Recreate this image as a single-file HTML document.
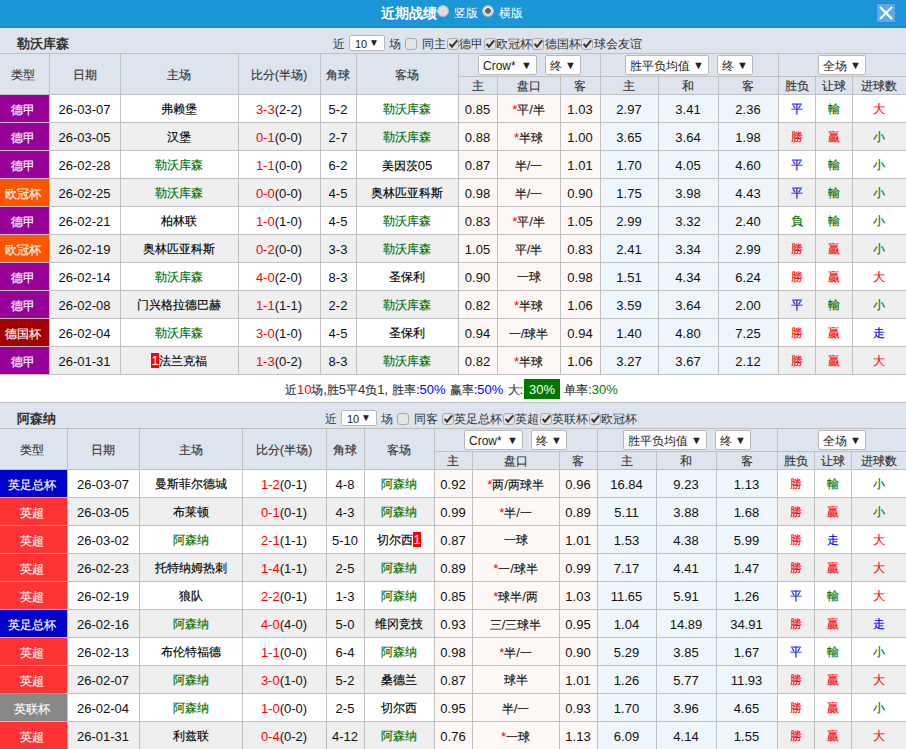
<!DOCTYPE html><html><head><meta charset="utf-8"><style>
*{margin:0;padding:0;box-sizing:border-box}
html,body{width:906px;height:749px;overflow:hidden;background:#fff;font-family:"Liberation Sans",sans-serif;font-size:12px;color:#222}
div{position:absolute}
.bar{left:0;top:0;width:906px;height:27px;background:#1a96d6}
.barline{left:0;top:27px;width:906px;height:1px;background:#0c8ed4}
.ttl{left:381px;top:4px;font-size:14px;font-weight:bold;color:#fff;line-height:18px}
.radio{top:5px;width:12px;height:12px;border-radius:50%;background:#dedede;border:1px solid #b8b8b8}
.radio.on{background:radial-gradient(circle,#666 0,#666 2.6px,#f2f2f2 3.2px,#d0d0d0 5px)}

.tx.wt{color:#fff;font-size:12px;line-height:16px}
.close{left:875px;top:2px;width:22px;height:22px;background:#5aaae8;border:2px solid #2a88e0}
.close svg{position:absolute;left:-2px;top:-2px}
.bg{left:0;width:906px;background:#dde4ee}
.ln{}
.stitle{left:17px;font-size:13px;font-weight:bold;color:#333}
.c{text-align:center;white-space:nowrap;overflow:hidden;color:#111}
.hd{color:#333}
.ty{color:#fff;padding-right:3px}
.h0{padding-right:3px}
.st{color:#f00;font-size:14px}
.n{font-size:13px}
.k{display:inline-block;width:1em;text-align:center;font-style:normal}
.z{-webkit-text-stroke:0.15px currentColor}
.rc{font-style:normal;background:#f00;color:#fff;display:inline-block;width:8px;height:15px;line-height:16px;text-align:center;vertical-align:middle;position:relative;top:-1px;font-size:12px}
.tx{line-height:18px;white-space:nowrap;color:#333}
.sel{background:#fff;border:1px solid #b8b8b8;border-radius:2px;white-space:nowrap;color:#222;padding-left:4px}
.sel .ar{position:absolute;right:4px;top:-1px;font-size:11px}
.sel.sm .st2{font-size:11px;padding-left:1px;position:relative;top:0}
.sel.sm .ar{font-size:10px;right:5px}
.cb{width:12px;height:12px;border:1px solid #aaa;border-radius:3px;background:#e4e4e4}
.cb svg{position:absolute;left:-1px;top:-1px}
.sum{line-height:18px;white-space:nowrap;color:#333;word-spacing:1px}
.gbox{background:#007700;color:#fff;padding:2px 5px 0;display:inline-block;line-height:17px;margin-left:1px;vertical-align:top;position:relative;top:-2px}
</style></head><body>
<div class="bar"></div><div class="barline"></div>
<div class="ttl"><i class="k">近</i><i class="k">期</i><i class="k">战</i><i class="k">绩</i></div>
<div class="radio" style="left:437px"></div><div class="tx wt" style="left:454px;top:5px"><i class="k">竖</i><i class="k">版</i></div>
<div class="radio on" style="left:482px"></div><div class="tx wt" style="left:499px;top:5px"><i class="k">横</i><i class="k">版</i></div>
<div class="close"><svg width="22" height="22" viewBox="0 0 22 22"><path d="M5 5 L17 17 M17 5 L5 17" stroke="#fff" stroke-width="2.2"/></svg></div>
<div class="bg" style="top:28px;height:25px"></div>
<div class="stitle" style="top:28px;height:25px;line-height:32px"><i class="k">勒</i><i class="k">沃</i><i class="k">库</i><i class="k">森</i></div>
<div class="tx" style="left:333px;top:35px;"><i class="k">近</i></div>
<div class="sel sm" style="left:349px;top:35px;width:36px;height:16px;line-height:16px"><span class="st2">10</span><span class="ar">▼</span></div>
<div class="tx" style="left:389px;top:35px;"><i class="k">场</i></div>
<div class="cb" style="left:405px;top:38px"></div>
<div class="tx" style="left:422px;top:35px;"><i class="k">同</i><i class="k">主</i></div>
<div class="cb" style="left:447px;top:38px"><svg width="12" height="12" viewBox="0 0 12 12"><path d="M2.6 5.8 L5 8.6 L10.2 2.4" stroke="#333" stroke-width="2" fill="none"/></svg></div>
<div class="tx" style="left:459px;top:35px;"><i class="k">德</i><i class="k">甲</i></div>
<div class="cb" style="left:484px;top:38px"><svg width="12" height="12" viewBox="0 0 12 12"><path d="M2.6 5.8 L5 8.6 L10.2 2.4" stroke="#333" stroke-width="2" fill="none"/></svg></div>
<div class="tx" style="left:496px;top:35px;"><i class="k">欧</i><i class="k">冠</i><i class="k">杯</i></div>
<div class="cb" style="left:532px;top:38px"><svg width="12" height="12" viewBox="0 0 12 12"><path d="M2.6 5.8 L5 8.6 L10.2 2.4" stroke="#333" stroke-width="2" fill="none"/></svg></div>
<div class="tx" style="left:545px;top:35px;"><i class="k">德</i><i class="k">国</i><i class="k">杯</i></div>
<div class="cb" style="left:581px;top:38px"><svg width="12" height="12" viewBox="0 0 12 12"><path d="M2.6 5.8 L5 8.6 L10.2 2.4" stroke="#333" stroke-width="2" fill="none"/></svg></div>
<div class="tx" style="left:594px;top:35px;"><i class="k">球</i><i class="k">会</i><i class="k">友</i><i class="k">谊</i></div>
<div class="ln" style="left:0px;width:906px;top:53px;height:1px;background:#c0c0c0"></div>
<div class="bg" style="top:54px;height:40px"></div>
<div class="c hd h0" style="left:0px;width:49px;top:54px;height:40px;line-height:42px;"><span class="z"><i class="k">类</i><i class="k">型</i></span></div>
<div class="c hd" style="left:49px;width:71px;top:54px;height:40px;line-height:42px;"><span class="z"><i class="k">日</i><i class="k">期</i></span></div>
<div class="c hd" style="left:120px;width:118px;top:54px;height:40px;line-height:42px;"><span class="z"><i class="k">主</i><i class="k">场</i></span></div>
<div class="c hd" style="left:238px;width:82px;top:54px;height:40px;line-height:42px;"><span class="z"><i class="k">比</i><i class="k">分</i></span><span class="n">(</span><span class="z"><i class="k">半</i><i class="k">场</i></span><span class="n">)</span></div>
<div class="c hd" style="left:320px;width:36px;top:54px;height:40px;line-height:42px;"><span class="z"><i class="k">角</i><i class="k">球</i></span></div>
<div class="c hd" style="left:356px;width:102px;top:54px;height:40px;line-height:42px;"><span class="z"><i class="k">客</i><i class="k">场</i></span></div>
<div class="c hd" style="left:458px;width:39px;top:77px;height:17px;line-height:19px;"><span class="z"><i class="k">主</i></span></div>
<div class="c hd" style="left:497px;width:63px;top:77px;height:17px;line-height:19px;"><span class="z"><i class="k">盘</i><i class="k">口</i></span></div>
<div class="c hd" style="left:560px;width:40px;top:77px;height:17px;line-height:19px;"><span class="z"><i class="k">客</i></span></div>
<div class="c hd" style="left:600px;width:58px;top:77px;height:17px;line-height:19px;"><span class="z"><i class="k">主</i></span></div>
<div class="c hd" style="left:658px;width:60px;top:77px;height:17px;line-height:19px;"><span class="z"><i class="k">和</i></span></div>
<div class="c hd" style="left:718px;width:60px;top:77px;height:17px;line-height:19px;"><span class="z"><i class="k">客</i></span></div>
<div class="c hd" style="left:778px;width:37px;top:77px;height:17px;line-height:19px;"><span class="z"><i class="k">胜</i><i class="k">负</i></span></div>
<div class="c hd" style="left:815px;width:37px;top:77px;height:17px;line-height:19px;"><span class="z"><i class="k">让</i><i class="k">球</i></span></div>
<div class="c hd" style="left:852px;width:54px;top:77px;height:17px;line-height:19px;"><span class="z"><i class="k">进</i><i class="k">球</i><i class="k">数</i></span></div>
<div class="ln" style="left:458px;width:448px;top:76px;height:1px;background:#c0c0c0"></div>
<div class="ln" style="left:0px;width:906px;top:94px;height:1px;background:#c0c0c0"></div>
<div class="sel" style="left:478px;top:55px;width:59px;height:20px;line-height:20px"><span class="st2">Crow*</span><span class="ar">▼</span></div>
<div class="sel" style="left:545px;top:55px;width:36px;height:20px;line-height:20px"><span class="st2"><i class="k">终</i></span><span class="ar">▼</span></div>
<div class="sel" style="left:625px;top:55px;width:84px;height:20px;line-height:20px"><span class="st2"><i class="k">胜</i><i class="k">平</i><i class="k">负</i><i class="k">均</i><i class="k">值</i></span><span class="ar">▼</span></div>
<div class="sel" style="left:717px;top:55px;width:36px;height:20px;line-height:20px"><span class="st2"><i class="k">终</i></span><span class="ar">▼</span></div>
<div class="sel" style="left:818px;top:55px;width:48px;height:20px;line-height:20px"><span class="st2"><i class="k">全</i><i class="k">场</i></span><span class="ar">▼</span></div>
<div class="ln" style="left:49px;width:1px;top:54px;height:40px;background:#c0c0c0"></div>
<div class="ln" style="left:120px;width:1px;top:54px;height:40px;background:#c0c0c0"></div>
<div class="ln" style="left:238px;width:1px;top:54px;height:40px;background:#c0c0c0"></div>
<div class="ln" style="left:320px;width:1px;top:54px;height:40px;background:#c0c0c0"></div>
<div class="ln" style="left:356px;width:1px;top:54px;height:40px;background:#c0c0c0"></div>
<div class="ln" style="left:458px;width:1px;top:54px;height:40px;background:#c0c0c0"></div>
<div class="ln" style="left:497px;width:1px;top:76px;height:18px;background:#c0c0c0"></div>
<div class="ln" style="left:560px;width:1px;top:76px;height:18px;background:#c0c0c0"></div>
<div class="ln" style="left:600px;width:1px;top:54px;height:40px;background:#c0c0c0"></div>
<div class="ln" style="left:658px;width:1px;top:76px;height:18px;background:#c0c0c0"></div>
<div class="ln" style="left:718px;width:1px;top:76px;height:18px;background:#c0c0c0"></div>
<div class="ln" style="left:778px;width:1px;top:54px;height:40px;background:#c0c0c0"></div>
<div class="ln" style="left:815px;width:1px;top:76px;height:18px;background:#c0c0c0"></div>
<div class="ln" style="left:852px;width:1px;top:76px;height:18px;background:#c0c0c0"></div>
<div class="bg" style="top:95px;height:27px;background:#ffffff"></div>
<div class="bg" style="top:95px;height:27px;left:458px;width:142px;background:#fdf8f5"></div>
<div class="bg" style="top:95px;height:27px;left:600px;width:178px;background:#eef6fb"></div>
<div class="c ty" style="left:0px;width:49px;top:95px;height:27px;line-height:30px;background:#990099"><span class="z"><i class="k">德</i><i class="k">甲</i></span></div>
<div class="c" style="left:49px;width:71px;top:95px;height:27px;line-height:29px;"><span class="n">26-03-07</span></div>
<div class="c" style="left:120px;width:118px;top:95px;height:27px;line-height:29px;"><span style="color:#000"><span class="z"><i class="k">弗</i><i class="k">赖</i><i class="k">堡</i></span></span></div>
<div class="c" style="left:238px;width:82px;top:95px;height:27px;line-height:29px;"><span style="color:#f00"><span class="n">3-3</span></span><span class="n">(2-2)</span></div>
<div class="c" style="left:320px;width:36px;top:95px;height:27px;line-height:29px;"><span class="n">5-2</span></div>
<div class="c" style="left:356px;width:102px;top:95px;height:27px;line-height:29px;"><span style="color:#007000"><span class="z"><i class="k">勒</i><i class="k">沃</i><i class="k">库</i><i class="k">森</i></span></span></div>
<div class="c" style="left:458px;width:39px;top:95px;height:27px;line-height:29px;"><span class="n">0.85</span></div>
<div class="c" style="left:497px;width:63px;top:95px;height:27px;line-height:29px;"><span class="st"><span class="n">*</span></span><span class="z"><i class="k">平</i></span><span class="n">/</span><span class="z"><i class="k">半</i></span></div>
<div class="c" style="left:560px;width:40px;top:95px;height:27px;line-height:29px;"><span class="n">1.03</span></div>
<div class="c" style="left:600px;width:58px;top:95px;height:27px;line-height:29px;"><span class="n">2.97</span></div>
<div class="c" style="left:658px;width:60px;top:95px;height:27px;line-height:29px;"><span class="n">3.41</span></div>
<div class="c" style="left:718px;width:60px;top:95px;height:27px;line-height:29px;"><span class="n">2.36</span></div>
<div class="c" style="left:778px;width:37px;top:95px;height:27px;line-height:29px;color:#0000ff"><span class="z"><i class="k">平</i></span></div>
<div class="c" style="left:815px;width:37px;top:95px;height:27px;line-height:29px;color:#007000"><span class="z"><i class="k">輸</i></span></div>
<div class="c" style="left:852px;width:54px;top:95px;height:27px;line-height:29px;color:#ff0000"><span class="z"><i class="k">大</i></span></div>
<div class="ln" style="left:0px;width:906px;top:122px;height:1px;background:#c0c0c0"></div>
<div class="ln" style="left:49px;width:1px;top:95px;height:27px;background:#c0c0c0"></div>
<div class="ln" style="left:120px;width:1px;top:95px;height:27px;background:#c0c0c0"></div>
<div class="ln" style="left:238px;width:1px;top:95px;height:27px;background:#c0c0c0"></div>
<div class="ln" style="left:320px;width:1px;top:95px;height:27px;background:#c0c0c0"></div>
<div class="ln" style="left:356px;width:1px;top:95px;height:27px;background:#c0c0c0"></div>
<div class="ln" style="left:458px;width:1px;top:95px;height:27px;background:#c0c0c0"></div>
<div class="ln" style="left:497px;width:1px;top:95px;height:27px;background:#c0c0c0"></div>
<div class="ln" style="left:560px;width:1px;top:95px;height:27px;background:#c0c0c0"></div>
<div class="ln" style="left:600px;width:1px;top:95px;height:27px;background:#c0c0c0"></div>
<div class="ln" style="left:658px;width:1px;top:95px;height:27px;background:#c0c0c0"></div>
<div class="ln" style="left:718px;width:1px;top:95px;height:27px;background:#c0c0c0"></div>
<div class="ln" style="left:778px;width:1px;top:95px;height:27px;background:#c0c0c0"></div>
<div class="ln" style="left:815px;width:1px;top:95px;height:27px;background:#c0c0c0"></div>
<div class="ln" style="left:852px;width:1px;top:95px;height:27px;background:#c0c0c0"></div>
<div class="bg" style="top:123px;height:27px;background:#efefef"></div>
<div class="bg" style="top:123px;height:27px;left:458px;width:142px;background:#fdf8f5"></div>
<div class="bg" style="top:123px;height:27px;left:600px;width:178px;background:#eef6fb"></div>
<div class="c ty" style="left:0px;width:49px;top:123px;height:27px;line-height:30px;background:#990099"><span class="z"><i class="k">德</i><i class="k">甲</i></span></div>
<div class="c" style="left:49px;width:71px;top:123px;height:27px;line-height:29px;"><span class="n">26-03-05</span></div>
<div class="c" style="left:120px;width:118px;top:123px;height:27px;line-height:29px;"><span style="color:#000"><span class="z"><i class="k">汉</i><i class="k">堡</i></span></span></div>
<div class="c" style="left:238px;width:82px;top:123px;height:27px;line-height:29px;"><span style="color:#f00"><span class="n">0-1</span></span><span class="n">(0-0)</span></div>
<div class="c" style="left:320px;width:36px;top:123px;height:27px;line-height:29px;"><span class="n">2-7</span></div>
<div class="c" style="left:356px;width:102px;top:123px;height:27px;line-height:29px;"><span style="color:#007000"><span class="z"><i class="k">勒</i><i class="k">沃</i><i class="k">库</i><i class="k">森</i></span></span></div>
<div class="c" style="left:458px;width:39px;top:123px;height:27px;line-height:29px;"><span class="n">0.88</span></div>
<div class="c" style="left:497px;width:63px;top:123px;height:27px;line-height:29px;"><span class="st"><span class="n">*</span></span><span class="z"><i class="k">半</i><i class="k">球</i></span></div>
<div class="c" style="left:560px;width:40px;top:123px;height:27px;line-height:29px;"><span class="n">1.00</span></div>
<div class="c" style="left:600px;width:58px;top:123px;height:27px;line-height:29px;"><span class="n">3.65</span></div>
<div class="c" style="left:658px;width:60px;top:123px;height:27px;line-height:29px;"><span class="n">3.64</span></div>
<div class="c" style="left:718px;width:60px;top:123px;height:27px;line-height:29px;"><span class="n">1.98</span></div>
<div class="c" style="left:778px;width:37px;top:123px;height:27px;line-height:29px;color:#ff0000"><span class="z"><i class="k">勝</i></span></div>
<div class="c" style="left:815px;width:37px;top:123px;height:27px;line-height:29px;color:#ff0000"><span class="z"><i class="k">贏</i></span></div>
<div class="c" style="left:852px;width:54px;top:123px;height:27px;line-height:29px;color:#007000"><span class="z"><i class="k">小</i></span></div>
<div class="ln" style="left:0px;width:906px;top:150px;height:1px;background:#c0c0c0"></div>
<div class="ln" style="left:49px;width:1px;top:123px;height:27px;background:#c0c0c0"></div>
<div class="ln" style="left:120px;width:1px;top:123px;height:27px;background:#c0c0c0"></div>
<div class="ln" style="left:238px;width:1px;top:123px;height:27px;background:#c0c0c0"></div>
<div class="ln" style="left:320px;width:1px;top:123px;height:27px;background:#c0c0c0"></div>
<div class="ln" style="left:356px;width:1px;top:123px;height:27px;background:#c0c0c0"></div>
<div class="ln" style="left:458px;width:1px;top:123px;height:27px;background:#c0c0c0"></div>
<div class="ln" style="left:497px;width:1px;top:123px;height:27px;background:#c0c0c0"></div>
<div class="ln" style="left:560px;width:1px;top:123px;height:27px;background:#c0c0c0"></div>
<div class="ln" style="left:600px;width:1px;top:123px;height:27px;background:#c0c0c0"></div>
<div class="ln" style="left:658px;width:1px;top:123px;height:27px;background:#c0c0c0"></div>
<div class="ln" style="left:718px;width:1px;top:123px;height:27px;background:#c0c0c0"></div>
<div class="ln" style="left:778px;width:1px;top:123px;height:27px;background:#c0c0c0"></div>
<div class="ln" style="left:815px;width:1px;top:123px;height:27px;background:#c0c0c0"></div>
<div class="ln" style="left:852px;width:1px;top:123px;height:27px;background:#c0c0c0"></div>
<div class="bg" style="top:151px;height:27px;background:#ffffff"></div>
<div class="bg" style="top:151px;height:27px;left:458px;width:142px;background:#fdf8f5"></div>
<div class="bg" style="top:151px;height:27px;left:600px;width:178px;background:#eef6fb"></div>
<div class="c ty" style="left:0px;width:49px;top:151px;height:27px;line-height:30px;background:#990099"><span class="z"><i class="k">德</i><i class="k">甲</i></span></div>
<div class="c" style="left:49px;width:71px;top:151px;height:27px;line-height:29px;"><span class="n">26-02-28</span></div>
<div class="c" style="left:120px;width:118px;top:151px;height:27px;line-height:29px;"><span style="color:#007000"><span class="z"><i class="k">勒</i><i class="k">沃</i><i class="k">库</i><i class="k">森</i></span></span></div>
<div class="c" style="left:238px;width:82px;top:151px;height:27px;line-height:29px;"><span style="color:#f00"><span class="n">1-1</span></span><span class="n">(0-0)</span></div>
<div class="c" style="left:320px;width:36px;top:151px;height:27px;line-height:29px;"><span class="n">6-2</span></div>
<div class="c" style="left:356px;width:102px;top:151px;height:27px;line-height:29px;"><span style="color:#000"><span class="z"><i class="k">美</i><i class="k">因</i><i class="k">茨</i></span><span class="n">05</span></span></div>
<div class="c" style="left:458px;width:39px;top:151px;height:27px;line-height:29px;"><span class="n">0.87</span></div>
<div class="c" style="left:497px;width:63px;top:151px;height:27px;line-height:29px;"><span class="z"><i class="k">半</i></span><span class="n">/</span><span class="z"><i class="k">一</i></span></div>
<div class="c" style="left:560px;width:40px;top:151px;height:27px;line-height:29px;"><span class="n">1.01</span></div>
<div class="c" style="left:600px;width:58px;top:151px;height:27px;line-height:29px;"><span class="n">1.70</span></div>
<div class="c" style="left:658px;width:60px;top:151px;height:27px;line-height:29px;"><span class="n">4.05</span></div>
<div class="c" style="left:718px;width:60px;top:151px;height:27px;line-height:29px;"><span class="n">4.60</span></div>
<div class="c" style="left:778px;width:37px;top:151px;height:27px;line-height:29px;color:#0000ff"><span class="z"><i class="k">平</i></span></div>
<div class="c" style="left:815px;width:37px;top:151px;height:27px;line-height:29px;color:#007000"><span class="z"><i class="k">輸</i></span></div>
<div class="c" style="left:852px;width:54px;top:151px;height:27px;line-height:29px;color:#007000"><span class="z"><i class="k">小</i></span></div>
<div class="ln" style="left:0px;width:906px;top:178px;height:1px;background:#c0c0c0"></div>
<div class="ln" style="left:49px;width:1px;top:151px;height:27px;background:#c0c0c0"></div>
<div class="ln" style="left:120px;width:1px;top:151px;height:27px;background:#c0c0c0"></div>
<div class="ln" style="left:238px;width:1px;top:151px;height:27px;background:#c0c0c0"></div>
<div class="ln" style="left:320px;width:1px;top:151px;height:27px;background:#c0c0c0"></div>
<div class="ln" style="left:356px;width:1px;top:151px;height:27px;background:#c0c0c0"></div>
<div class="ln" style="left:458px;width:1px;top:151px;height:27px;background:#c0c0c0"></div>
<div class="ln" style="left:497px;width:1px;top:151px;height:27px;background:#c0c0c0"></div>
<div class="ln" style="left:560px;width:1px;top:151px;height:27px;background:#c0c0c0"></div>
<div class="ln" style="left:600px;width:1px;top:151px;height:27px;background:#c0c0c0"></div>
<div class="ln" style="left:658px;width:1px;top:151px;height:27px;background:#c0c0c0"></div>
<div class="ln" style="left:718px;width:1px;top:151px;height:27px;background:#c0c0c0"></div>
<div class="ln" style="left:778px;width:1px;top:151px;height:27px;background:#c0c0c0"></div>
<div class="ln" style="left:815px;width:1px;top:151px;height:27px;background:#c0c0c0"></div>
<div class="ln" style="left:852px;width:1px;top:151px;height:27px;background:#c0c0c0"></div>
<div class="bg" style="top:179px;height:27px;background:#efefef"></div>
<div class="bg" style="top:179px;height:27px;left:458px;width:142px;background:#fdf8f5"></div>
<div class="bg" style="top:179px;height:27px;left:600px;width:178px;background:#eef6fb"></div>
<div class="c ty" style="left:0px;width:49px;top:179px;height:27px;line-height:30px;background:#ff5500"><span class="z"><i class="k">欧</i><i class="k">冠</i><i class="k">杯</i></span></div>
<div class="c" style="left:49px;width:71px;top:179px;height:27px;line-height:29px;"><span class="n">26-02-25</span></div>
<div class="c" style="left:120px;width:118px;top:179px;height:27px;line-height:29px;"><span style="color:#007000"><span class="z"><i class="k">勒</i><i class="k">沃</i><i class="k">库</i><i class="k">森</i></span></span></div>
<div class="c" style="left:238px;width:82px;top:179px;height:27px;line-height:29px;"><span style="color:#f00"><span class="n">0-0</span></span><span class="n">(0-0)</span></div>
<div class="c" style="left:320px;width:36px;top:179px;height:27px;line-height:29px;"><span class="n">4-5</span></div>
<div class="c" style="left:356px;width:102px;top:179px;height:27px;line-height:29px;"><span style="color:#000"><span class="z"><i class="k">奥</i><i class="k">林</i><i class="k">匹</i><i class="k">亚</i><i class="k">科</i><i class="k">斯</i></span></span></div>
<div class="c" style="left:458px;width:39px;top:179px;height:27px;line-height:29px;"><span class="n">0.98</span></div>
<div class="c" style="left:497px;width:63px;top:179px;height:27px;line-height:29px;"><span class="z"><i class="k">半</i></span><span class="n">/</span><span class="z"><i class="k">一</i></span></div>
<div class="c" style="left:560px;width:40px;top:179px;height:27px;line-height:29px;"><span class="n">0.90</span></div>
<div class="c" style="left:600px;width:58px;top:179px;height:27px;line-height:29px;"><span class="n">1.75</span></div>
<div class="c" style="left:658px;width:60px;top:179px;height:27px;line-height:29px;"><span class="n">3.98</span></div>
<div class="c" style="left:718px;width:60px;top:179px;height:27px;line-height:29px;"><span class="n">4.43</span></div>
<div class="c" style="left:778px;width:37px;top:179px;height:27px;line-height:29px;color:#0000ff"><span class="z"><i class="k">平</i></span></div>
<div class="c" style="left:815px;width:37px;top:179px;height:27px;line-height:29px;color:#007000"><span class="z"><i class="k">輸</i></span></div>
<div class="c" style="left:852px;width:54px;top:179px;height:27px;line-height:29px;color:#007000"><span class="z"><i class="k">小</i></span></div>
<div class="ln" style="left:0px;width:906px;top:206px;height:1px;background:#c0c0c0"></div>
<div class="ln" style="left:49px;width:1px;top:179px;height:27px;background:#c0c0c0"></div>
<div class="ln" style="left:120px;width:1px;top:179px;height:27px;background:#c0c0c0"></div>
<div class="ln" style="left:238px;width:1px;top:179px;height:27px;background:#c0c0c0"></div>
<div class="ln" style="left:320px;width:1px;top:179px;height:27px;background:#c0c0c0"></div>
<div class="ln" style="left:356px;width:1px;top:179px;height:27px;background:#c0c0c0"></div>
<div class="ln" style="left:458px;width:1px;top:179px;height:27px;background:#c0c0c0"></div>
<div class="ln" style="left:497px;width:1px;top:179px;height:27px;background:#c0c0c0"></div>
<div class="ln" style="left:560px;width:1px;top:179px;height:27px;background:#c0c0c0"></div>
<div class="ln" style="left:600px;width:1px;top:179px;height:27px;background:#c0c0c0"></div>
<div class="ln" style="left:658px;width:1px;top:179px;height:27px;background:#c0c0c0"></div>
<div class="ln" style="left:718px;width:1px;top:179px;height:27px;background:#c0c0c0"></div>
<div class="ln" style="left:778px;width:1px;top:179px;height:27px;background:#c0c0c0"></div>
<div class="ln" style="left:815px;width:1px;top:179px;height:27px;background:#c0c0c0"></div>
<div class="ln" style="left:852px;width:1px;top:179px;height:27px;background:#c0c0c0"></div>
<div class="bg" style="top:207px;height:27px;background:#ffffff"></div>
<div class="bg" style="top:207px;height:27px;left:458px;width:142px;background:#fdf8f5"></div>
<div class="bg" style="top:207px;height:27px;left:600px;width:178px;background:#eef6fb"></div>
<div class="c ty" style="left:0px;width:49px;top:207px;height:27px;line-height:30px;background:#990099"><span class="z"><i class="k">德</i><i class="k">甲</i></span></div>
<div class="c" style="left:49px;width:71px;top:207px;height:27px;line-height:29px;"><span class="n">26-02-21</span></div>
<div class="c" style="left:120px;width:118px;top:207px;height:27px;line-height:29px;"><span style="color:#000"><span class="z"><i class="k">柏</i><i class="k">林</i><i class="k">联</i></span></span></div>
<div class="c" style="left:238px;width:82px;top:207px;height:27px;line-height:29px;"><span style="color:#f00"><span class="n">1-0</span></span><span class="n">(1-0)</span></div>
<div class="c" style="left:320px;width:36px;top:207px;height:27px;line-height:29px;"><span class="n">4-5</span></div>
<div class="c" style="left:356px;width:102px;top:207px;height:27px;line-height:29px;"><span style="color:#007000"><span class="z"><i class="k">勒</i><i class="k">沃</i><i class="k">库</i><i class="k">森</i></span></span></div>
<div class="c" style="left:458px;width:39px;top:207px;height:27px;line-height:29px;"><span class="n">0.83</span></div>
<div class="c" style="left:497px;width:63px;top:207px;height:27px;line-height:29px;"><span class="st"><span class="n">*</span></span><span class="z"><i class="k">平</i></span><span class="n">/</span><span class="z"><i class="k">半</i></span></div>
<div class="c" style="left:560px;width:40px;top:207px;height:27px;line-height:29px;"><span class="n">1.05</span></div>
<div class="c" style="left:600px;width:58px;top:207px;height:27px;line-height:29px;"><span class="n">2.99</span></div>
<div class="c" style="left:658px;width:60px;top:207px;height:27px;line-height:29px;"><span class="n">3.32</span></div>
<div class="c" style="left:718px;width:60px;top:207px;height:27px;line-height:29px;"><span class="n">2.40</span></div>
<div class="c" style="left:778px;width:37px;top:207px;height:27px;line-height:29px;color:#007000"><span class="z"><i class="k">負</i></span></div>
<div class="c" style="left:815px;width:37px;top:207px;height:27px;line-height:29px;color:#007000"><span class="z"><i class="k">輸</i></span></div>
<div class="c" style="left:852px;width:54px;top:207px;height:27px;line-height:29px;color:#007000"><span class="z"><i class="k">小</i></span></div>
<div class="ln" style="left:0px;width:906px;top:234px;height:1px;background:#c0c0c0"></div>
<div class="ln" style="left:49px;width:1px;top:207px;height:27px;background:#c0c0c0"></div>
<div class="ln" style="left:120px;width:1px;top:207px;height:27px;background:#c0c0c0"></div>
<div class="ln" style="left:238px;width:1px;top:207px;height:27px;background:#c0c0c0"></div>
<div class="ln" style="left:320px;width:1px;top:207px;height:27px;background:#c0c0c0"></div>
<div class="ln" style="left:356px;width:1px;top:207px;height:27px;background:#c0c0c0"></div>
<div class="ln" style="left:458px;width:1px;top:207px;height:27px;background:#c0c0c0"></div>
<div class="ln" style="left:497px;width:1px;top:207px;height:27px;background:#c0c0c0"></div>
<div class="ln" style="left:560px;width:1px;top:207px;height:27px;background:#c0c0c0"></div>
<div class="ln" style="left:600px;width:1px;top:207px;height:27px;background:#c0c0c0"></div>
<div class="ln" style="left:658px;width:1px;top:207px;height:27px;background:#c0c0c0"></div>
<div class="ln" style="left:718px;width:1px;top:207px;height:27px;background:#c0c0c0"></div>
<div class="ln" style="left:778px;width:1px;top:207px;height:27px;background:#c0c0c0"></div>
<div class="ln" style="left:815px;width:1px;top:207px;height:27px;background:#c0c0c0"></div>
<div class="ln" style="left:852px;width:1px;top:207px;height:27px;background:#c0c0c0"></div>
<div class="bg" style="top:235px;height:27px;background:#efefef"></div>
<div class="bg" style="top:235px;height:27px;left:458px;width:142px;background:#fdf8f5"></div>
<div class="bg" style="top:235px;height:27px;left:600px;width:178px;background:#eef6fb"></div>
<div class="c ty" style="left:0px;width:49px;top:235px;height:27px;line-height:30px;background:#ff5500"><span class="z"><i class="k">欧</i><i class="k">冠</i><i class="k">杯</i></span></div>
<div class="c" style="left:49px;width:71px;top:235px;height:27px;line-height:29px;"><span class="n">26-02-19</span></div>
<div class="c" style="left:120px;width:118px;top:235px;height:27px;line-height:29px;"><span style="color:#000"><span class="z"><i class="k">奥</i><i class="k">林</i><i class="k">匹</i><i class="k">亚</i><i class="k">科</i><i class="k">斯</i></span></span></div>
<div class="c" style="left:238px;width:82px;top:235px;height:27px;line-height:29px;"><span style="color:#f00"><span class="n">0-2</span></span><span class="n">(0-0)</span></div>
<div class="c" style="left:320px;width:36px;top:235px;height:27px;line-height:29px;"><span class="n">3-3</span></div>
<div class="c" style="left:356px;width:102px;top:235px;height:27px;line-height:29px;"><span style="color:#007000"><span class="z"><i class="k">勒</i><i class="k">沃</i><i class="k">库</i><i class="k">森</i></span></span></div>
<div class="c" style="left:458px;width:39px;top:235px;height:27px;line-height:29px;"><span class="n">1.05</span></div>
<div class="c" style="left:497px;width:63px;top:235px;height:27px;line-height:29px;"><span class="z"><i class="k">平</i></span><span class="n">/</span><span class="z"><i class="k">半</i></span></div>
<div class="c" style="left:560px;width:40px;top:235px;height:27px;line-height:29px;"><span class="n">0.83</span></div>
<div class="c" style="left:600px;width:58px;top:235px;height:27px;line-height:29px;"><span class="n">2.41</span></div>
<div class="c" style="left:658px;width:60px;top:235px;height:27px;line-height:29px;"><span class="n">3.34</span></div>
<div class="c" style="left:718px;width:60px;top:235px;height:27px;line-height:29px;"><span class="n">2.99</span></div>
<div class="c" style="left:778px;width:37px;top:235px;height:27px;line-height:29px;color:#ff0000"><span class="z"><i class="k">勝</i></span></div>
<div class="c" style="left:815px;width:37px;top:235px;height:27px;line-height:29px;color:#ff0000"><span class="z"><i class="k">贏</i></span></div>
<div class="c" style="left:852px;width:54px;top:235px;height:27px;line-height:29px;color:#007000"><span class="z"><i class="k">小</i></span></div>
<div class="ln" style="left:0px;width:906px;top:262px;height:1px;background:#c0c0c0"></div>
<div class="ln" style="left:49px;width:1px;top:235px;height:27px;background:#c0c0c0"></div>
<div class="ln" style="left:120px;width:1px;top:235px;height:27px;background:#c0c0c0"></div>
<div class="ln" style="left:238px;width:1px;top:235px;height:27px;background:#c0c0c0"></div>
<div class="ln" style="left:320px;width:1px;top:235px;height:27px;background:#c0c0c0"></div>
<div class="ln" style="left:356px;width:1px;top:235px;height:27px;background:#c0c0c0"></div>
<div class="ln" style="left:458px;width:1px;top:235px;height:27px;background:#c0c0c0"></div>
<div class="ln" style="left:497px;width:1px;top:235px;height:27px;background:#c0c0c0"></div>
<div class="ln" style="left:560px;width:1px;top:235px;height:27px;background:#c0c0c0"></div>
<div class="ln" style="left:600px;width:1px;top:235px;height:27px;background:#c0c0c0"></div>
<div class="ln" style="left:658px;width:1px;top:235px;height:27px;background:#c0c0c0"></div>
<div class="ln" style="left:718px;width:1px;top:235px;height:27px;background:#c0c0c0"></div>
<div class="ln" style="left:778px;width:1px;top:235px;height:27px;background:#c0c0c0"></div>
<div class="ln" style="left:815px;width:1px;top:235px;height:27px;background:#c0c0c0"></div>
<div class="ln" style="left:852px;width:1px;top:235px;height:27px;background:#c0c0c0"></div>
<div class="bg" style="top:263px;height:27px;background:#ffffff"></div>
<div class="bg" style="top:263px;height:27px;left:458px;width:142px;background:#fdf8f5"></div>
<div class="bg" style="top:263px;height:27px;left:600px;width:178px;background:#eef6fb"></div>
<div class="c ty" style="left:0px;width:49px;top:263px;height:27px;line-height:30px;background:#990099"><span class="z"><i class="k">德</i><i class="k">甲</i></span></div>
<div class="c" style="left:49px;width:71px;top:263px;height:27px;line-height:29px;"><span class="n">26-02-14</span></div>
<div class="c" style="left:120px;width:118px;top:263px;height:27px;line-height:29px;"><span style="color:#007000"><span class="z"><i class="k">勒</i><i class="k">沃</i><i class="k">库</i><i class="k">森</i></span></span></div>
<div class="c" style="left:238px;width:82px;top:263px;height:27px;line-height:29px;"><span style="color:#f00"><span class="n">4-0</span></span><span class="n">(2-0)</span></div>
<div class="c" style="left:320px;width:36px;top:263px;height:27px;line-height:29px;"><span class="n">8-3</span></div>
<div class="c" style="left:356px;width:102px;top:263px;height:27px;line-height:29px;"><span style="color:#000"><span class="z"><i class="k">圣</i><i class="k">保</i><i class="k">利</i></span></span></div>
<div class="c" style="left:458px;width:39px;top:263px;height:27px;line-height:29px;"><span class="n">0.90</span></div>
<div class="c" style="left:497px;width:63px;top:263px;height:27px;line-height:29px;"><span class="z"><i class="k">一</i><i class="k">球</i></span></div>
<div class="c" style="left:560px;width:40px;top:263px;height:27px;line-height:29px;"><span class="n">0.98</span></div>
<div class="c" style="left:600px;width:58px;top:263px;height:27px;line-height:29px;"><span class="n">1.51</span></div>
<div class="c" style="left:658px;width:60px;top:263px;height:27px;line-height:29px;"><span class="n">4.34</span></div>
<div class="c" style="left:718px;width:60px;top:263px;height:27px;line-height:29px;"><span class="n">6.24</span></div>
<div class="c" style="left:778px;width:37px;top:263px;height:27px;line-height:29px;color:#ff0000"><span class="z"><i class="k">勝</i></span></div>
<div class="c" style="left:815px;width:37px;top:263px;height:27px;line-height:29px;color:#ff0000"><span class="z"><i class="k">贏</i></span></div>
<div class="c" style="left:852px;width:54px;top:263px;height:27px;line-height:29px;color:#ff0000"><span class="z"><i class="k">大</i></span></div>
<div class="ln" style="left:0px;width:906px;top:290px;height:1px;background:#c0c0c0"></div>
<div class="ln" style="left:49px;width:1px;top:263px;height:27px;background:#c0c0c0"></div>
<div class="ln" style="left:120px;width:1px;top:263px;height:27px;background:#c0c0c0"></div>
<div class="ln" style="left:238px;width:1px;top:263px;height:27px;background:#c0c0c0"></div>
<div class="ln" style="left:320px;width:1px;top:263px;height:27px;background:#c0c0c0"></div>
<div class="ln" style="left:356px;width:1px;top:263px;height:27px;background:#c0c0c0"></div>
<div class="ln" style="left:458px;width:1px;top:263px;height:27px;background:#c0c0c0"></div>
<div class="ln" style="left:497px;width:1px;top:263px;height:27px;background:#c0c0c0"></div>
<div class="ln" style="left:560px;width:1px;top:263px;height:27px;background:#c0c0c0"></div>
<div class="ln" style="left:600px;width:1px;top:263px;height:27px;background:#c0c0c0"></div>
<div class="ln" style="left:658px;width:1px;top:263px;height:27px;background:#c0c0c0"></div>
<div class="ln" style="left:718px;width:1px;top:263px;height:27px;background:#c0c0c0"></div>
<div class="ln" style="left:778px;width:1px;top:263px;height:27px;background:#c0c0c0"></div>
<div class="ln" style="left:815px;width:1px;top:263px;height:27px;background:#c0c0c0"></div>
<div class="ln" style="left:852px;width:1px;top:263px;height:27px;background:#c0c0c0"></div>
<div class="bg" style="top:291px;height:27px;background:#efefef"></div>
<div class="bg" style="top:291px;height:27px;left:458px;width:142px;background:#fdf8f5"></div>
<div class="bg" style="top:291px;height:27px;left:600px;width:178px;background:#eef6fb"></div>
<div class="c ty" style="left:0px;width:49px;top:291px;height:27px;line-height:30px;background:#990099"><span class="z"><i class="k">德</i><i class="k">甲</i></span></div>
<div class="c" style="left:49px;width:71px;top:291px;height:27px;line-height:29px;"><span class="n">26-02-08</span></div>
<div class="c" style="left:120px;width:118px;top:291px;height:27px;line-height:29px;"><span style="color:#000"><span class="z"><i class="k">门</i><i class="k">兴</i><i class="k">格</i><i class="k">拉</i><i class="k">德</i><i class="k">巴</i><i class="k">赫</i></span></span></div>
<div class="c" style="left:238px;width:82px;top:291px;height:27px;line-height:29px;"><span style="color:#f00"><span class="n">1-1</span></span><span class="n">(1-1)</span></div>
<div class="c" style="left:320px;width:36px;top:291px;height:27px;line-height:29px;"><span class="n">2-2</span></div>
<div class="c" style="left:356px;width:102px;top:291px;height:27px;line-height:29px;"><span style="color:#007000"><span class="z"><i class="k">勒</i><i class="k">沃</i><i class="k">库</i><i class="k">森</i></span></span></div>
<div class="c" style="left:458px;width:39px;top:291px;height:27px;line-height:29px;"><span class="n">0.82</span></div>
<div class="c" style="left:497px;width:63px;top:291px;height:27px;line-height:29px;"><span class="st"><span class="n">*</span></span><span class="z"><i class="k">半</i><i class="k">球</i></span></div>
<div class="c" style="left:560px;width:40px;top:291px;height:27px;line-height:29px;"><span class="n">1.06</span></div>
<div class="c" style="left:600px;width:58px;top:291px;height:27px;line-height:29px;"><span class="n">3.59</span></div>
<div class="c" style="left:658px;width:60px;top:291px;height:27px;line-height:29px;"><span class="n">3.64</span></div>
<div class="c" style="left:718px;width:60px;top:291px;height:27px;line-height:29px;"><span class="n">2.00</span></div>
<div class="c" style="left:778px;width:37px;top:291px;height:27px;line-height:29px;color:#0000ff"><span class="z"><i class="k">平</i></span></div>
<div class="c" style="left:815px;width:37px;top:291px;height:27px;line-height:29px;color:#007000"><span class="z"><i class="k">輸</i></span></div>
<div class="c" style="left:852px;width:54px;top:291px;height:27px;line-height:29px;color:#007000"><span class="z"><i class="k">小</i></span></div>
<div class="ln" style="left:0px;width:906px;top:318px;height:1px;background:#c0c0c0"></div>
<div class="ln" style="left:49px;width:1px;top:291px;height:27px;background:#c0c0c0"></div>
<div class="ln" style="left:120px;width:1px;top:291px;height:27px;background:#c0c0c0"></div>
<div class="ln" style="left:238px;width:1px;top:291px;height:27px;background:#c0c0c0"></div>
<div class="ln" style="left:320px;width:1px;top:291px;height:27px;background:#c0c0c0"></div>
<div class="ln" style="left:356px;width:1px;top:291px;height:27px;background:#c0c0c0"></div>
<div class="ln" style="left:458px;width:1px;top:291px;height:27px;background:#c0c0c0"></div>
<div class="ln" style="left:497px;width:1px;top:291px;height:27px;background:#c0c0c0"></div>
<div class="ln" style="left:560px;width:1px;top:291px;height:27px;background:#c0c0c0"></div>
<div class="ln" style="left:600px;width:1px;top:291px;height:27px;background:#c0c0c0"></div>
<div class="ln" style="left:658px;width:1px;top:291px;height:27px;background:#c0c0c0"></div>
<div class="ln" style="left:718px;width:1px;top:291px;height:27px;background:#c0c0c0"></div>
<div class="ln" style="left:778px;width:1px;top:291px;height:27px;background:#c0c0c0"></div>
<div class="ln" style="left:815px;width:1px;top:291px;height:27px;background:#c0c0c0"></div>
<div class="ln" style="left:852px;width:1px;top:291px;height:27px;background:#c0c0c0"></div>
<div class="bg" style="top:319px;height:27px;background:#ffffff"></div>
<div class="bg" style="top:319px;height:27px;left:458px;width:142px;background:#fdf8f5"></div>
<div class="bg" style="top:319px;height:27px;left:600px;width:178px;background:#eef6fb"></div>
<div class="c ty" style="left:0px;width:49px;top:319px;height:27px;line-height:30px;background:#a30000"><span class="z"><i class="k">德</i><i class="k">国</i><i class="k">杯</i></span></div>
<div class="c" style="left:49px;width:71px;top:319px;height:27px;line-height:29px;"><span class="n">26-02-04</span></div>
<div class="c" style="left:120px;width:118px;top:319px;height:27px;line-height:29px;"><span style="color:#007000"><span class="z"><i class="k">勒</i><i class="k">沃</i><i class="k">库</i><i class="k">森</i></span></span></div>
<div class="c" style="left:238px;width:82px;top:319px;height:27px;line-height:29px;"><span style="color:#f00"><span class="n">3-0</span></span><span class="n">(1-0)</span></div>
<div class="c" style="left:320px;width:36px;top:319px;height:27px;line-height:29px;"><span class="n">4-5</span></div>
<div class="c" style="left:356px;width:102px;top:319px;height:27px;line-height:29px;"><span style="color:#000"><span class="z"><i class="k">圣</i><i class="k">保</i><i class="k">利</i></span></span></div>
<div class="c" style="left:458px;width:39px;top:319px;height:27px;line-height:29px;"><span class="n">0.94</span></div>
<div class="c" style="left:497px;width:63px;top:319px;height:27px;line-height:29px;"><span class="z"><i class="k">一</i></span><span class="n">/</span><span class="z"><i class="k">球</i><i class="k">半</i></span></div>
<div class="c" style="left:560px;width:40px;top:319px;height:27px;line-height:29px;"><span class="n">0.94</span></div>
<div class="c" style="left:600px;width:58px;top:319px;height:27px;line-height:29px;"><span class="n">1.40</span></div>
<div class="c" style="left:658px;width:60px;top:319px;height:27px;line-height:29px;"><span class="n">4.80</span></div>
<div class="c" style="left:718px;width:60px;top:319px;height:27px;line-height:29px;"><span class="n">7.25</span></div>
<div class="c" style="left:778px;width:37px;top:319px;height:27px;line-height:29px;color:#ff0000"><span class="z"><i class="k">勝</i></span></div>
<div class="c" style="left:815px;width:37px;top:319px;height:27px;line-height:29px;color:#ff0000"><span class="z"><i class="k">贏</i></span></div>
<div class="c" style="left:852px;width:54px;top:319px;height:27px;line-height:29px;color:#0000ff"><span class="z"><i class="k">走</i></span></div>
<div class="ln" style="left:0px;width:906px;top:346px;height:1px;background:#c0c0c0"></div>
<div class="ln" style="left:49px;width:1px;top:319px;height:27px;background:#c0c0c0"></div>
<div class="ln" style="left:120px;width:1px;top:319px;height:27px;background:#c0c0c0"></div>
<div class="ln" style="left:238px;width:1px;top:319px;height:27px;background:#c0c0c0"></div>
<div class="ln" style="left:320px;width:1px;top:319px;height:27px;background:#c0c0c0"></div>
<div class="ln" style="left:356px;width:1px;top:319px;height:27px;background:#c0c0c0"></div>
<div class="ln" style="left:458px;width:1px;top:319px;height:27px;background:#c0c0c0"></div>
<div class="ln" style="left:497px;width:1px;top:319px;height:27px;background:#c0c0c0"></div>
<div class="ln" style="left:560px;width:1px;top:319px;height:27px;background:#c0c0c0"></div>
<div class="ln" style="left:600px;width:1px;top:319px;height:27px;background:#c0c0c0"></div>
<div class="ln" style="left:658px;width:1px;top:319px;height:27px;background:#c0c0c0"></div>
<div class="ln" style="left:718px;width:1px;top:319px;height:27px;background:#c0c0c0"></div>
<div class="ln" style="left:778px;width:1px;top:319px;height:27px;background:#c0c0c0"></div>
<div class="ln" style="left:815px;width:1px;top:319px;height:27px;background:#c0c0c0"></div>
<div class="ln" style="left:852px;width:1px;top:319px;height:27px;background:#c0c0c0"></div>
<div class="bg" style="top:347px;height:27px;background:#efefef"></div>
<div class="bg" style="top:347px;height:27px;left:458px;width:142px;background:#fdf8f5"></div>
<div class="bg" style="top:347px;height:27px;left:600px;width:178px;background:#eef6fb"></div>
<div class="c ty" style="left:0px;width:49px;top:347px;height:27px;line-height:30px;background:#990099"><span class="z"><i class="k">德</i><i class="k">甲</i></span></div>
<div class="c" style="left:49px;width:71px;top:347px;height:27px;line-height:29px;"><span class="n">26-01-31</span></div>
<div class="c" style="left:120px;width:118px;top:347px;height:27px;line-height:29px;"><span style="color:#000"><i class="rc"><span class="n">1</span></i><span class="z"><i class="k">法</i><i class="k">兰</i><i class="k">克</i><i class="k">福</i></span></span></div>
<div class="c" style="left:238px;width:82px;top:347px;height:27px;line-height:29px;"><span style="color:#f00"><span class="n">1-3</span></span><span class="n">(0-2)</span></div>
<div class="c" style="left:320px;width:36px;top:347px;height:27px;line-height:29px;"><span class="n">8-3</span></div>
<div class="c" style="left:356px;width:102px;top:347px;height:27px;line-height:29px;"><span style="color:#007000"><span class="z"><i class="k">勒</i><i class="k">沃</i><i class="k">库</i><i class="k">森</i></span></span></div>
<div class="c" style="left:458px;width:39px;top:347px;height:27px;line-height:29px;"><span class="n">0.82</span></div>
<div class="c" style="left:497px;width:63px;top:347px;height:27px;line-height:29px;"><span class="st"><span class="n">*</span></span><span class="z"><i class="k">半</i><i class="k">球</i></span></div>
<div class="c" style="left:560px;width:40px;top:347px;height:27px;line-height:29px;"><span class="n">1.06</span></div>
<div class="c" style="left:600px;width:58px;top:347px;height:27px;line-height:29px;"><span class="n">3.27</span></div>
<div class="c" style="left:658px;width:60px;top:347px;height:27px;line-height:29px;"><span class="n">3.67</span></div>
<div class="c" style="left:718px;width:60px;top:347px;height:27px;line-height:29px;"><span class="n">2.12</span></div>
<div class="c" style="left:778px;width:37px;top:347px;height:27px;line-height:29px;color:#ff0000"><span class="z"><i class="k">勝</i></span></div>
<div class="c" style="left:815px;width:37px;top:347px;height:27px;line-height:29px;color:#ff0000"><span class="z"><i class="k">贏</i></span></div>
<div class="c" style="left:852px;width:54px;top:347px;height:27px;line-height:29px;color:#ff0000"><span class="z"><i class="k">大</i></span></div>
<div class="ln" style="left:0px;width:906px;top:374px;height:1px;background:#c0c0c0"></div>
<div class="ln" style="left:49px;width:1px;top:347px;height:27px;background:#c0c0c0"></div>
<div class="ln" style="left:120px;width:1px;top:347px;height:27px;background:#c0c0c0"></div>
<div class="ln" style="left:238px;width:1px;top:347px;height:27px;background:#c0c0c0"></div>
<div class="ln" style="left:320px;width:1px;top:347px;height:27px;background:#c0c0c0"></div>
<div class="ln" style="left:356px;width:1px;top:347px;height:27px;background:#c0c0c0"></div>
<div class="ln" style="left:458px;width:1px;top:347px;height:27px;background:#c0c0c0"></div>
<div class="ln" style="left:497px;width:1px;top:347px;height:27px;background:#c0c0c0"></div>
<div class="ln" style="left:560px;width:1px;top:347px;height:27px;background:#c0c0c0"></div>
<div class="ln" style="left:600px;width:1px;top:347px;height:27px;background:#c0c0c0"></div>
<div class="ln" style="left:658px;width:1px;top:347px;height:27px;background:#c0c0c0"></div>
<div class="ln" style="left:718px;width:1px;top:347px;height:27px;background:#c0c0c0"></div>
<div class="ln" style="left:778px;width:1px;top:347px;height:27px;background:#c0c0c0"></div>
<div class="ln" style="left:815px;width:1px;top:347px;height:27px;background:#c0c0c0"></div>
<div class="ln" style="left:852px;width:1px;top:347px;height:27px;background:#c0c0c0"></div>
<div class="sum" style="left:285px;top:381px"><span class="z"><i class="k">近</i></span><span style="color:#f00"><span class="n">10</span></span><span class="z"><i class="k">场</i>,<i class="k">胜</i></span><span class="n">5</span><span class="z"><i class="k">平</i></span><span class="n">4</span><span class="z"><i class="k">负</i></span><span class="n">1</span><span class="z">, <i class="k">胜</i><i class="k">率</i></span><span style="color:#00f"><span class="z">:</span><span class="n">50%</span></span><span class="z"> <i class="k">赢</i><i class="k">率</i></span><span style="color:#00f"><span class="z">:</span><span class="n">50%</span></span><span class="z"> <i class="k">大</i>:</span><span class="gbox"><span class="n">30%</span></span><span class="z"> <i class="k">单</i><i class="k">率</i></span><span style="color:#008000"><span class="z">:</span><span class="n">30%</span></span></div>
<div class="ln" style="left:0px;width:906px;top:402px;height:1px;background:#c0c0c0"></div>
<div class="bg" style="top:403px;height:25px"></div>
<div class="stitle" style="top:403px;height:25px;line-height:32px"><i class="k">阿</i><i class="k">森</i><i class="k">纳</i></div>
<div class="tx" style="left:325px;top:410px;"><i class="k">近</i></div>
<div class="sel sm" style="left:341px;top:410px;width:36px;height:16px;line-height:16px"><span class="st2">10</span><span class="ar">▼</span></div>
<div class="tx" style="left:381px;top:410px;"><i class="k">场</i></div>
<div class="cb" style="left:397px;top:413px"></div>
<div class="tx" style="left:414px;top:410px;"><i class="k">同</i><i class="k">客</i></div>
<div class="cb" style="left:442px;top:413px"><svg width="12" height="12" viewBox="0 0 12 12"><path d="M2.6 5.8 L5 8.6 L10.2 2.4" stroke="#333" stroke-width="2" fill="none"/></svg></div>
<div class="tx" style="left:454px;top:410px;"><i class="k">英</i><i class="k">足</i><i class="k">总</i><i class="k">杯</i></div>
<div class="cb" style="left:503px;top:413px"><svg width="12" height="12" viewBox="0 0 12 12"><path d="M2.6 5.8 L5 8.6 L10.2 2.4" stroke="#333" stroke-width="2" fill="none"/></svg></div>
<div class="tx" style="left:515px;top:410px;"><i class="k">英</i><i class="k">超</i></div>
<div class="cb" style="left:540px;top:413px"><svg width="12" height="12" viewBox="0 0 12 12"><path d="M2.6 5.8 L5 8.6 L10.2 2.4" stroke="#333" stroke-width="2" fill="none"/></svg></div>
<div class="tx" style="left:552px;top:410px;"><i class="k">英</i><i class="k">联</i><i class="k">杯</i></div>
<div class="cb" style="left:589px;top:413px"><svg width="12" height="12" viewBox="0 0 12 12"><path d="M2.6 5.8 L5 8.6 L10.2 2.4" stroke="#333" stroke-width="2" fill="none"/></svg></div>
<div class="tx" style="left:601px;top:410px;"><i class="k">欧</i><i class="k">冠</i><i class="k">杯</i></div>
<div class="ln" style="left:0px;width:906px;top:428px;height:1px;background:#c0c0c0"></div>
<div class="bg" style="top:429px;height:40px"></div>
<div class="c hd h0" style="left:0px;width:67px;top:429px;height:40px;line-height:42px;"><span class="z"><i class="k">类</i><i class="k">型</i></span></div>
<div class="c hd" style="left:67px;width:72px;top:429px;height:40px;line-height:42px;"><span class="z"><i class="k">日</i><i class="k">期</i></span></div>
<div class="c hd" style="left:139px;width:103px;top:429px;height:40px;line-height:42px;"><span class="z"><i class="k">主</i><i class="k">场</i></span></div>
<div class="c hd" style="left:242px;width:84px;top:429px;height:40px;line-height:42px;"><span class="z"><i class="k">比</i><i class="k">分</i></span><span class="n">(</span><span class="z"><i class="k">半</i><i class="k">场</i></span><span class="n">)</span></div>
<div class="c hd" style="left:326px;width:38px;top:429px;height:40px;line-height:42px;"><span class="z"><i class="k">角</i><i class="k">球</i></span></div>
<div class="c hd" style="left:364px;width:70px;top:429px;height:40px;line-height:42px;"><span class="z"><i class="k">客</i><i class="k">场</i></span></div>
<div class="c hd" style="left:434px;width:38px;top:452px;height:17px;line-height:19px;"><span class="z"><i class="k">主</i></span></div>
<div class="c hd" style="left:472px;width:87px;top:452px;height:17px;line-height:19px;"><span class="z"><i class="k">盘</i><i class="k">口</i></span></div>
<div class="c hd" style="left:559px;width:38px;top:452px;height:17px;line-height:19px;"><span class="z"><i class="k">客</i></span></div>
<div class="c hd" style="left:597px;width:59px;top:452px;height:17px;line-height:19px;"><span class="z"><i class="k">主</i></span></div>
<div class="c hd" style="left:656px;width:60px;top:452px;height:17px;line-height:19px;"><span class="z"><i class="k">和</i></span></div>
<div class="c hd" style="left:716px;width:61px;top:452px;height:17px;line-height:19px;"><span class="z"><i class="k">客</i></span></div>
<div class="c hd" style="left:777px;width:37px;top:452px;height:17px;line-height:19px;"><span class="z"><i class="k">胜</i><i class="k">负</i></span></div>
<div class="c hd" style="left:814px;width:37px;top:452px;height:17px;line-height:19px;"><span class="z"><i class="k">让</i><i class="k">球</i></span></div>
<div class="c hd" style="left:851px;width:55px;top:452px;height:17px;line-height:19px;"><span class="z"><i class="k">进</i><i class="k">球</i><i class="k">数</i></span></div>
<div class="ln" style="left:434px;width:472px;top:451px;height:1px;background:#c0c0c0"></div>
<div class="ln" style="left:0px;width:906px;top:469px;height:1px;background:#c0c0c0"></div>
<div class="sel" style="left:464px;top:430px;width:59px;height:20px;line-height:20px"><span class="st2">Crow*</span><span class="ar">▼</span></div>
<div class="sel" style="left:531px;top:430px;width:36px;height:20px;line-height:20px"><span class="st2"><i class="k">终</i></span><span class="ar">▼</span></div>
<div class="sel" style="left:623px;top:430px;width:84px;height:20px;line-height:20px"><span class="st2"><i class="k">胜</i><i class="k">平</i><i class="k">负</i><i class="k">均</i><i class="k">值</i></span><span class="ar">▼</span></div>
<div class="sel" style="left:715px;top:430px;width:36px;height:20px;line-height:20px"><span class="st2"><i class="k">终</i></span><span class="ar">▼</span></div>
<div class="sel" style="left:818px;top:430px;width:48px;height:20px;line-height:20px"><span class="st2"><i class="k">全</i><i class="k">场</i></span><span class="ar">▼</span></div>
<div class="ln" style="left:67px;width:1px;top:429px;height:40px;background:#c0c0c0"></div>
<div class="ln" style="left:139px;width:1px;top:429px;height:40px;background:#c0c0c0"></div>
<div class="ln" style="left:242px;width:1px;top:429px;height:40px;background:#c0c0c0"></div>
<div class="ln" style="left:326px;width:1px;top:429px;height:40px;background:#c0c0c0"></div>
<div class="ln" style="left:364px;width:1px;top:429px;height:40px;background:#c0c0c0"></div>
<div class="ln" style="left:434px;width:1px;top:429px;height:40px;background:#c0c0c0"></div>
<div class="ln" style="left:472px;width:1px;top:451px;height:18px;background:#c0c0c0"></div>
<div class="ln" style="left:559px;width:1px;top:451px;height:18px;background:#c0c0c0"></div>
<div class="ln" style="left:597px;width:1px;top:429px;height:40px;background:#c0c0c0"></div>
<div class="ln" style="left:656px;width:1px;top:451px;height:18px;background:#c0c0c0"></div>
<div class="ln" style="left:716px;width:1px;top:451px;height:18px;background:#c0c0c0"></div>
<div class="ln" style="left:777px;width:1px;top:429px;height:40px;background:#c0c0c0"></div>
<div class="ln" style="left:814px;width:1px;top:451px;height:18px;background:#c0c0c0"></div>
<div class="ln" style="left:851px;width:1px;top:451px;height:18px;background:#c0c0c0"></div>
<div class="bg" style="top:470px;height:27px;background:#ffffff"></div>
<div class="bg" style="top:470px;height:27px;left:434px;width:163px;background:#fdf8f5"></div>
<div class="bg" style="top:470px;height:27px;left:597px;width:180px;background:#eef6fb"></div>
<div class="c ty" style="left:0px;width:67px;top:470px;height:27px;line-height:30px;background:#0000cc"><span class="z"><i class="k">英</i><i class="k">足</i><i class="k">总</i><i class="k">杯</i></span></div>
<div class="c" style="left:67px;width:72px;top:470px;height:27px;line-height:29px;"><span class="n">26-03-07</span></div>
<div class="c" style="left:139px;width:103px;top:470px;height:27px;line-height:29px;"><span style="color:#000"><span class="z"><i class="k">曼</i><i class="k">斯</i><i class="k">菲</i><i class="k">尔</i><i class="k">德</i><i class="k">城</i></span></span></div>
<div class="c" style="left:242px;width:84px;top:470px;height:27px;line-height:29px;"><span style="color:#f00"><span class="n">1-2</span></span><span class="n">(0-1)</span></div>
<div class="c" style="left:326px;width:38px;top:470px;height:27px;line-height:29px;"><span class="n">4-8</span></div>
<div class="c" style="left:364px;width:70px;top:470px;height:27px;line-height:29px;"><span style="color:#007000"><span class="z"><i class="k">阿</i><i class="k">森</i><i class="k">纳</i></span></span></div>
<div class="c" style="left:434px;width:38px;top:470px;height:27px;line-height:29px;"><span class="n">0.92</span></div>
<div class="c" style="left:472px;width:87px;top:470px;height:27px;line-height:29px;"><span class="st"><span class="n">*</span></span><span class="z"><i class="k">两</i></span><span class="n">/</span><span class="z"><i class="k">两</i><i class="k">球</i><i class="k">半</i></span></div>
<div class="c" style="left:559px;width:38px;top:470px;height:27px;line-height:29px;"><span class="n">0.96</span></div>
<div class="c" style="left:597px;width:59px;top:470px;height:27px;line-height:29px;"><span class="n">16.84</span></div>
<div class="c" style="left:656px;width:60px;top:470px;height:27px;line-height:29px;"><span class="n">9.23</span></div>
<div class="c" style="left:716px;width:61px;top:470px;height:27px;line-height:29px;"><span class="n">1.13</span></div>
<div class="c" style="left:777px;width:37px;top:470px;height:27px;line-height:29px;color:#ff0000"><span class="z"><i class="k">勝</i></span></div>
<div class="c" style="left:814px;width:37px;top:470px;height:27px;line-height:29px;color:#007000"><span class="z"><i class="k">輸</i></span></div>
<div class="c" style="left:851px;width:55px;top:470px;height:27px;line-height:29px;color:#007000"><span class="z"><i class="k">小</i></span></div>
<div class="ln" style="left:0px;width:906px;top:497px;height:1px;background:#c0c0c0"></div>
<div class="ln" style="left:67px;width:1px;top:470px;height:27px;background:#c0c0c0"></div>
<div class="ln" style="left:139px;width:1px;top:470px;height:27px;background:#c0c0c0"></div>
<div class="ln" style="left:242px;width:1px;top:470px;height:27px;background:#c0c0c0"></div>
<div class="ln" style="left:326px;width:1px;top:470px;height:27px;background:#c0c0c0"></div>
<div class="ln" style="left:364px;width:1px;top:470px;height:27px;background:#c0c0c0"></div>
<div class="ln" style="left:434px;width:1px;top:470px;height:27px;background:#c0c0c0"></div>
<div class="ln" style="left:472px;width:1px;top:470px;height:27px;background:#c0c0c0"></div>
<div class="ln" style="left:559px;width:1px;top:470px;height:27px;background:#c0c0c0"></div>
<div class="ln" style="left:597px;width:1px;top:470px;height:27px;background:#c0c0c0"></div>
<div class="ln" style="left:656px;width:1px;top:470px;height:27px;background:#c0c0c0"></div>
<div class="ln" style="left:716px;width:1px;top:470px;height:27px;background:#c0c0c0"></div>
<div class="ln" style="left:777px;width:1px;top:470px;height:27px;background:#c0c0c0"></div>
<div class="ln" style="left:814px;width:1px;top:470px;height:27px;background:#c0c0c0"></div>
<div class="ln" style="left:851px;width:1px;top:470px;height:27px;background:#c0c0c0"></div>
<div class="bg" style="top:498px;height:27px;background:#efefef"></div>
<div class="bg" style="top:498px;height:27px;left:434px;width:163px;background:#fdf8f5"></div>
<div class="bg" style="top:498px;height:27px;left:597px;width:180px;background:#eef6fb"></div>
<div class="c ty" style="left:0px;width:67px;top:498px;height:27px;line-height:30px;background:#ff3333"><span class="z"><i class="k">英</i><i class="k">超</i></span></div>
<div class="c" style="left:67px;width:72px;top:498px;height:27px;line-height:29px;"><span class="n">26-03-05</span></div>
<div class="c" style="left:139px;width:103px;top:498px;height:27px;line-height:29px;"><span style="color:#000"><span class="z"><i class="k">布</i><i class="k">莱</i><i class="k">顿</i></span></span></div>
<div class="c" style="left:242px;width:84px;top:498px;height:27px;line-height:29px;"><span style="color:#f00"><span class="n">0-1</span></span><span class="n">(0-1)</span></div>
<div class="c" style="left:326px;width:38px;top:498px;height:27px;line-height:29px;"><span class="n">4-3</span></div>
<div class="c" style="left:364px;width:70px;top:498px;height:27px;line-height:29px;"><span style="color:#007000"><span class="z"><i class="k">阿</i><i class="k">森</i><i class="k">纳</i></span></span></div>
<div class="c" style="left:434px;width:38px;top:498px;height:27px;line-height:29px;"><span class="n">0.99</span></div>
<div class="c" style="left:472px;width:87px;top:498px;height:27px;line-height:29px;"><span class="st"><span class="n">*</span></span><span class="z"><i class="k">半</i></span><span class="n">/</span><span class="z"><i class="k">一</i></span></div>
<div class="c" style="left:559px;width:38px;top:498px;height:27px;line-height:29px;"><span class="n">0.89</span></div>
<div class="c" style="left:597px;width:59px;top:498px;height:27px;line-height:29px;"><span class="n">5.11</span></div>
<div class="c" style="left:656px;width:60px;top:498px;height:27px;line-height:29px;"><span class="n">3.88</span></div>
<div class="c" style="left:716px;width:61px;top:498px;height:27px;line-height:29px;"><span class="n">1.68</span></div>
<div class="c" style="left:777px;width:37px;top:498px;height:27px;line-height:29px;color:#ff0000"><span class="z"><i class="k">勝</i></span></div>
<div class="c" style="left:814px;width:37px;top:498px;height:27px;line-height:29px;color:#ff0000"><span class="z"><i class="k">贏</i></span></div>
<div class="c" style="left:851px;width:55px;top:498px;height:27px;line-height:29px;color:#007000"><span class="z"><i class="k">小</i></span></div>
<div class="ln" style="left:0px;width:906px;top:525px;height:1px;background:#c0c0c0"></div>
<div class="ln" style="left:67px;width:1px;top:498px;height:27px;background:#c0c0c0"></div>
<div class="ln" style="left:139px;width:1px;top:498px;height:27px;background:#c0c0c0"></div>
<div class="ln" style="left:242px;width:1px;top:498px;height:27px;background:#c0c0c0"></div>
<div class="ln" style="left:326px;width:1px;top:498px;height:27px;background:#c0c0c0"></div>
<div class="ln" style="left:364px;width:1px;top:498px;height:27px;background:#c0c0c0"></div>
<div class="ln" style="left:434px;width:1px;top:498px;height:27px;background:#c0c0c0"></div>
<div class="ln" style="left:472px;width:1px;top:498px;height:27px;background:#c0c0c0"></div>
<div class="ln" style="left:559px;width:1px;top:498px;height:27px;background:#c0c0c0"></div>
<div class="ln" style="left:597px;width:1px;top:498px;height:27px;background:#c0c0c0"></div>
<div class="ln" style="left:656px;width:1px;top:498px;height:27px;background:#c0c0c0"></div>
<div class="ln" style="left:716px;width:1px;top:498px;height:27px;background:#c0c0c0"></div>
<div class="ln" style="left:777px;width:1px;top:498px;height:27px;background:#c0c0c0"></div>
<div class="ln" style="left:814px;width:1px;top:498px;height:27px;background:#c0c0c0"></div>
<div class="ln" style="left:851px;width:1px;top:498px;height:27px;background:#c0c0c0"></div>
<div class="bg" style="top:526px;height:27px;background:#ffffff"></div>
<div class="bg" style="top:526px;height:27px;left:434px;width:163px;background:#fdf8f5"></div>
<div class="bg" style="top:526px;height:27px;left:597px;width:180px;background:#eef6fb"></div>
<div class="c ty" style="left:0px;width:67px;top:526px;height:27px;line-height:30px;background:#ff3333"><span class="z"><i class="k">英</i><i class="k">超</i></span></div>
<div class="c" style="left:67px;width:72px;top:526px;height:27px;line-height:29px;"><span class="n">26-03-02</span></div>
<div class="c" style="left:139px;width:103px;top:526px;height:27px;line-height:29px;"><span style="color:#007000"><span class="z"><i class="k">阿</i><i class="k">森</i><i class="k">纳</i></span></span></div>
<div class="c" style="left:242px;width:84px;top:526px;height:27px;line-height:29px;"><span style="color:#f00"><span class="n">2-1</span></span><span class="n">(1-1)</span></div>
<div class="c" style="left:326px;width:38px;top:526px;height:27px;line-height:29px;"><span class="n">5-10</span></div>
<div class="c" style="left:364px;width:70px;top:526px;height:27px;line-height:29px;"><span style="color:#000"><span class="z"><i class="k">切</i><i class="k">尔</i><i class="k">西</i></span><i class="rc"><span class="n">1</span></i></span></div>
<div class="c" style="left:434px;width:38px;top:526px;height:27px;line-height:29px;"><span class="n">0.87</span></div>
<div class="c" style="left:472px;width:87px;top:526px;height:27px;line-height:29px;"><span class="z"><i class="k">一</i><i class="k">球</i></span></div>
<div class="c" style="left:559px;width:38px;top:526px;height:27px;line-height:29px;"><span class="n">1.01</span></div>
<div class="c" style="left:597px;width:59px;top:526px;height:27px;line-height:29px;"><span class="n">1.53</span></div>
<div class="c" style="left:656px;width:60px;top:526px;height:27px;line-height:29px;"><span class="n">4.38</span></div>
<div class="c" style="left:716px;width:61px;top:526px;height:27px;line-height:29px;"><span class="n">5.99</span></div>
<div class="c" style="left:777px;width:37px;top:526px;height:27px;line-height:29px;color:#ff0000"><span class="z"><i class="k">勝</i></span></div>
<div class="c" style="left:814px;width:37px;top:526px;height:27px;line-height:29px;color:#0000ff"><span class="z"><i class="k">走</i></span></div>
<div class="c" style="left:851px;width:55px;top:526px;height:27px;line-height:29px;color:#ff0000"><span class="z"><i class="k">大</i></span></div>
<div class="ln" style="left:0px;width:906px;top:553px;height:1px;background:#c0c0c0"></div>
<div class="ln" style="left:67px;width:1px;top:526px;height:27px;background:#c0c0c0"></div>
<div class="ln" style="left:139px;width:1px;top:526px;height:27px;background:#c0c0c0"></div>
<div class="ln" style="left:242px;width:1px;top:526px;height:27px;background:#c0c0c0"></div>
<div class="ln" style="left:326px;width:1px;top:526px;height:27px;background:#c0c0c0"></div>
<div class="ln" style="left:364px;width:1px;top:526px;height:27px;background:#c0c0c0"></div>
<div class="ln" style="left:434px;width:1px;top:526px;height:27px;background:#c0c0c0"></div>
<div class="ln" style="left:472px;width:1px;top:526px;height:27px;background:#c0c0c0"></div>
<div class="ln" style="left:559px;width:1px;top:526px;height:27px;background:#c0c0c0"></div>
<div class="ln" style="left:597px;width:1px;top:526px;height:27px;background:#c0c0c0"></div>
<div class="ln" style="left:656px;width:1px;top:526px;height:27px;background:#c0c0c0"></div>
<div class="ln" style="left:716px;width:1px;top:526px;height:27px;background:#c0c0c0"></div>
<div class="ln" style="left:777px;width:1px;top:526px;height:27px;background:#c0c0c0"></div>
<div class="ln" style="left:814px;width:1px;top:526px;height:27px;background:#c0c0c0"></div>
<div class="ln" style="left:851px;width:1px;top:526px;height:27px;background:#c0c0c0"></div>
<div class="bg" style="top:554px;height:27px;background:#efefef"></div>
<div class="bg" style="top:554px;height:27px;left:434px;width:163px;background:#fdf8f5"></div>
<div class="bg" style="top:554px;height:27px;left:597px;width:180px;background:#eef6fb"></div>
<div class="c ty" style="left:0px;width:67px;top:554px;height:27px;line-height:30px;background:#ff3333"><span class="z"><i class="k">英</i><i class="k">超</i></span></div>
<div class="c" style="left:67px;width:72px;top:554px;height:27px;line-height:29px;"><span class="n">26-02-23</span></div>
<div class="c" style="left:139px;width:103px;top:554px;height:27px;line-height:29px;"><span style="color:#000"><span class="z"><i class="k">托</i><i class="k">特</i><i class="k">纳</i><i class="k">姆</i><i class="k">热</i><i class="k">刺</i></span></span></div>
<div class="c" style="left:242px;width:84px;top:554px;height:27px;line-height:29px;"><span style="color:#f00"><span class="n">1-4</span></span><span class="n">(1-1)</span></div>
<div class="c" style="left:326px;width:38px;top:554px;height:27px;line-height:29px;"><span class="n">2-5</span></div>
<div class="c" style="left:364px;width:70px;top:554px;height:27px;line-height:29px;"><span style="color:#007000"><span class="z"><i class="k">阿</i><i class="k">森</i><i class="k">纳</i></span></span></div>
<div class="c" style="left:434px;width:38px;top:554px;height:27px;line-height:29px;"><span class="n">0.89</span></div>
<div class="c" style="left:472px;width:87px;top:554px;height:27px;line-height:29px;"><span class="st"><span class="n">*</span></span><span class="z"><i class="k">一</i></span><span class="n">/</span><span class="z"><i class="k">球</i><i class="k">半</i></span></div>
<div class="c" style="left:559px;width:38px;top:554px;height:27px;line-height:29px;"><span class="n">0.99</span></div>
<div class="c" style="left:597px;width:59px;top:554px;height:27px;line-height:29px;"><span class="n">7.17</span></div>
<div class="c" style="left:656px;width:60px;top:554px;height:27px;line-height:29px;"><span class="n">4.41</span></div>
<div class="c" style="left:716px;width:61px;top:554px;height:27px;line-height:29px;"><span class="n">1.47</span></div>
<div class="c" style="left:777px;width:37px;top:554px;height:27px;line-height:29px;color:#ff0000"><span class="z"><i class="k">勝</i></span></div>
<div class="c" style="left:814px;width:37px;top:554px;height:27px;line-height:29px;color:#ff0000"><span class="z"><i class="k">贏</i></span></div>
<div class="c" style="left:851px;width:55px;top:554px;height:27px;line-height:29px;color:#ff0000"><span class="z"><i class="k">大</i></span></div>
<div class="ln" style="left:0px;width:906px;top:581px;height:1px;background:#c0c0c0"></div>
<div class="ln" style="left:67px;width:1px;top:554px;height:27px;background:#c0c0c0"></div>
<div class="ln" style="left:139px;width:1px;top:554px;height:27px;background:#c0c0c0"></div>
<div class="ln" style="left:242px;width:1px;top:554px;height:27px;background:#c0c0c0"></div>
<div class="ln" style="left:326px;width:1px;top:554px;height:27px;background:#c0c0c0"></div>
<div class="ln" style="left:364px;width:1px;top:554px;height:27px;background:#c0c0c0"></div>
<div class="ln" style="left:434px;width:1px;top:554px;height:27px;background:#c0c0c0"></div>
<div class="ln" style="left:472px;width:1px;top:554px;height:27px;background:#c0c0c0"></div>
<div class="ln" style="left:559px;width:1px;top:554px;height:27px;background:#c0c0c0"></div>
<div class="ln" style="left:597px;width:1px;top:554px;height:27px;background:#c0c0c0"></div>
<div class="ln" style="left:656px;width:1px;top:554px;height:27px;background:#c0c0c0"></div>
<div class="ln" style="left:716px;width:1px;top:554px;height:27px;background:#c0c0c0"></div>
<div class="ln" style="left:777px;width:1px;top:554px;height:27px;background:#c0c0c0"></div>
<div class="ln" style="left:814px;width:1px;top:554px;height:27px;background:#c0c0c0"></div>
<div class="ln" style="left:851px;width:1px;top:554px;height:27px;background:#c0c0c0"></div>
<div class="bg" style="top:582px;height:27px;background:#ffffff"></div>
<div class="bg" style="top:582px;height:27px;left:434px;width:163px;background:#fdf8f5"></div>
<div class="bg" style="top:582px;height:27px;left:597px;width:180px;background:#eef6fb"></div>
<div class="c ty" style="left:0px;width:67px;top:582px;height:27px;line-height:30px;background:#ff3333"><span class="z"><i class="k">英</i><i class="k">超</i></span></div>
<div class="c" style="left:67px;width:72px;top:582px;height:27px;line-height:29px;"><span class="n">26-02-19</span></div>
<div class="c" style="left:139px;width:103px;top:582px;height:27px;line-height:29px;"><span style="color:#000"><span class="z"><i class="k">狼</i><i class="k">队</i></span></span></div>
<div class="c" style="left:242px;width:84px;top:582px;height:27px;line-height:29px;"><span style="color:#f00"><span class="n">2-2</span></span><span class="n">(0-1)</span></div>
<div class="c" style="left:326px;width:38px;top:582px;height:27px;line-height:29px;"><span class="n">1-3</span></div>
<div class="c" style="left:364px;width:70px;top:582px;height:27px;line-height:29px;"><span style="color:#007000"><span class="z"><i class="k">阿</i><i class="k">森</i><i class="k">纳</i></span></span></div>
<div class="c" style="left:434px;width:38px;top:582px;height:27px;line-height:29px;"><span class="n">0.85</span></div>
<div class="c" style="left:472px;width:87px;top:582px;height:27px;line-height:29px;"><span class="st"><span class="n">*</span></span><span class="z"><i class="k">球</i><i class="k">半</i></span><span class="n">/</span><span class="z"><i class="k">两</i></span></div>
<div class="c" style="left:559px;width:38px;top:582px;height:27px;line-height:29px;"><span class="n">1.03</span></div>
<div class="c" style="left:597px;width:59px;top:582px;height:27px;line-height:29px;"><span class="n">11.65</span></div>
<div class="c" style="left:656px;width:60px;top:582px;height:27px;line-height:29px;"><span class="n">5.91</span></div>
<div class="c" style="left:716px;width:61px;top:582px;height:27px;line-height:29px;"><span class="n">1.26</span></div>
<div class="c" style="left:777px;width:37px;top:582px;height:27px;line-height:29px;color:#0000ff"><span class="z"><i class="k">平</i></span></div>
<div class="c" style="left:814px;width:37px;top:582px;height:27px;line-height:29px;color:#007000"><span class="z"><i class="k">輸</i></span></div>
<div class="c" style="left:851px;width:55px;top:582px;height:27px;line-height:29px;color:#ff0000"><span class="z"><i class="k">大</i></span></div>
<div class="ln" style="left:0px;width:906px;top:609px;height:1px;background:#c0c0c0"></div>
<div class="ln" style="left:67px;width:1px;top:582px;height:27px;background:#c0c0c0"></div>
<div class="ln" style="left:139px;width:1px;top:582px;height:27px;background:#c0c0c0"></div>
<div class="ln" style="left:242px;width:1px;top:582px;height:27px;background:#c0c0c0"></div>
<div class="ln" style="left:326px;width:1px;top:582px;height:27px;background:#c0c0c0"></div>
<div class="ln" style="left:364px;width:1px;top:582px;height:27px;background:#c0c0c0"></div>
<div class="ln" style="left:434px;width:1px;top:582px;height:27px;background:#c0c0c0"></div>
<div class="ln" style="left:472px;width:1px;top:582px;height:27px;background:#c0c0c0"></div>
<div class="ln" style="left:559px;width:1px;top:582px;height:27px;background:#c0c0c0"></div>
<div class="ln" style="left:597px;width:1px;top:582px;height:27px;background:#c0c0c0"></div>
<div class="ln" style="left:656px;width:1px;top:582px;height:27px;background:#c0c0c0"></div>
<div class="ln" style="left:716px;width:1px;top:582px;height:27px;background:#c0c0c0"></div>
<div class="ln" style="left:777px;width:1px;top:582px;height:27px;background:#c0c0c0"></div>
<div class="ln" style="left:814px;width:1px;top:582px;height:27px;background:#c0c0c0"></div>
<div class="ln" style="left:851px;width:1px;top:582px;height:27px;background:#c0c0c0"></div>
<div class="bg" style="top:610px;height:27px;background:#efefef"></div>
<div class="bg" style="top:610px;height:27px;left:434px;width:163px;background:#fdf8f5"></div>
<div class="bg" style="top:610px;height:27px;left:597px;width:180px;background:#eef6fb"></div>
<div class="c ty" style="left:0px;width:67px;top:610px;height:27px;line-height:30px;background:#0000cc"><span class="z"><i class="k">英</i><i class="k">足</i><i class="k">总</i><i class="k">杯</i></span></div>
<div class="c" style="left:67px;width:72px;top:610px;height:27px;line-height:29px;"><span class="n">26-02-16</span></div>
<div class="c" style="left:139px;width:103px;top:610px;height:27px;line-height:29px;"><span style="color:#007000"><span class="z"><i class="k">阿</i><i class="k">森</i><i class="k">纳</i></span></span></div>
<div class="c" style="left:242px;width:84px;top:610px;height:27px;line-height:29px;"><span style="color:#f00"><span class="n">4-0</span></span><span class="n">(4-0)</span></div>
<div class="c" style="left:326px;width:38px;top:610px;height:27px;line-height:29px;"><span class="n">5-0</span></div>
<div class="c" style="left:364px;width:70px;top:610px;height:27px;line-height:29px;"><span style="color:#000"><span class="z"><i class="k">维</i><i class="k">冈</i><i class="k">竞</i><i class="k">技</i></span></span></div>
<div class="c" style="left:434px;width:38px;top:610px;height:27px;line-height:29px;"><span class="n">0.93</span></div>
<div class="c" style="left:472px;width:87px;top:610px;height:27px;line-height:29px;"><span class="z"><i class="k">三</i></span><span class="n">/</span><span class="z"><i class="k">三</i><i class="k">球</i><i class="k">半</i></span></div>
<div class="c" style="left:559px;width:38px;top:610px;height:27px;line-height:29px;"><span class="n">0.95</span></div>
<div class="c" style="left:597px;width:59px;top:610px;height:27px;line-height:29px;"><span class="n">1.04</span></div>
<div class="c" style="left:656px;width:60px;top:610px;height:27px;line-height:29px;"><span class="n">14.89</span></div>
<div class="c" style="left:716px;width:61px;top:610px;height:27px;line-height:29px;"><span class="n">34.91</span></div>
<div class="c" style="left:777px;width:37px;top:610px;height:27px;line-height:29px;color:#ff0000"><span class="z"><i class="k">勝</i></span></div>
<div class="c" style="left:814px;width:37px;top:610px;height:27px;line-height:29px;color:#ff0000"><span class="z"><i class="k">贏</i></span></div>
<div class="c" style="left:851px;width:55px;top:610px;height:27px;line-height:29px;color:#0000ff"><span class="z"><i class="k">走</i></span></div>
<div class="ln" style="left:0px;width:906px;top:637px;height:1px;background:#c0c0c0"></div>
<div class="ln" style="left:67px;width:1px;top:610px;height:27px;background:#c0c0c0"></div>
<div class="ln" style="left:139px;width:1px;top:610px;height:27px;background:#c0c0c0"></div>
<div class="ln" style="left:242px;width:1px;top:610px;height:27px;background:#c0c0c0"></div>
<div class="ln" style="left:326px;width:1px;top:610px;height:27px;background:#c0c0c0"></div>
<div class="ln" style="left:364px;width:1px;top:610px;height:27px;background:#c0c0c0"></div>
<div class="ln" style="left:434px;width:1px;top:610px;height:27px;background:#c0c0c0"></div>
<div class="ln" style="left:472px;width:1px;top:610px;height:27px;background:#c0c0c0"></div>
<div class="ln" style="left:559px;width:1px;top:610px;height:27px;background:#c0c0c0"></div>
<div class="ln" style="left:597px;width:1px;top:610px;height:27px;background:#c0c0c0"></div>
<div class="ln" style="left:656px;width:1px;top:610px;height:27px;background:#c0c0c0"></div>
<div class="ln" style="left:716px;width:1px;top:610px;height:27px;background:#c0c0c0"></div>
<div class="ln" style="left:777px;width:1px;top:610px;height:27px;background:#c0c0c0"></div>
<div class="ln" style="left:814px;width:1px;top:610px;height:27px;background:#c0c0c0"></div>
<div class="ln" style="left:851px;width:1px;top:610px;height:27px;background:#c0c0c0"></div>
<div class="bg" style="top:638px;height:27px;background:#ffffff"></div>
<div class="bg" style="top:638px;height:27px;left:434px;width:163px;background:#fdf8f5"></div>
<div class="bg" style="top:638px;height:27px;left:597px;width:180px;background:#eef6fb"></div>
<div class="c ty" style="left:0px;width:67px;top:638px;height:27px;line-height:30px;background:#ff3333"><span class="z"><i class="k">英</i><i class="k">超</i></span></div>
<div class="c" style="left:67px;width:72px;top:638px;height:27px;line-height:29px;"><span class="n">26-02-13</span></div>
<div class="c" style="left:139px;width:103px;top:638px;height:27px;line-height:29px;"><span style="color:#000"><span class="z"><i class="k">布</i><i class="k">伦</i><i class="k">特</i><i class="k">福</i><i class="k">德</i></span></span></div>
<div class="c" style="left:242px;width:84px;top:638px;height:27px;line-height:29px;"><span style="color:#f00"><span class="n">1-1</span></span><span class="n">(0-0)</span></div>
<div class="c" style="left:326px;width:38px;top:638px;height:27px;line-height:29px;"><span class="n">6-4</span></div>
<div class="c" style="left:364px;width:70px;top:638px;height:27px;line-height:29px;"><span style="color:#007000"><span class="z"><i class="k">阿</i><i class="k">森</i><i class="k">纳</i></span></span></div>
<div class="c" style="left:434px;width:38px;top:638px;height:27px;line-height:29px;"><span class="n">0.98</span></div>
<div class="c" style="left:472px;width:87px;top:638px;height:27px;line-height:29px;"><span class="st"><span class="n">*</span></span><span class="z"><i class="k">半</i></span><span class="n">/</span><span class="z"><i class="k">一</i></span></div>
<div class="c" style="left:559px;width:38px;top:638px;height:27px;line-height:29px;"><span class="n">0.90</span></div>
<div class="c" style="left:597px;width:59px;top:638px;height:27px;line-height:29px;"><span class="n">5.29</span></div>
<div class="c" style="left:656px;width:60px;top:638px;height:27px;line-height:29px;"><span class="n">3.85</span></div>
<div class="c" style="left:716px;width:61px;top:638px;height:27px;line-height:29px;"><span class="n">1.67</span></div>
<div class="c" style="left:777px;width:37px;top:638px;height:27px;line-height:29px;color:#0000ff"><span class="z"><i class="k">平</i></span></div>
<div class="c" style="left:814px;width:37px;top:638px;height:27px;line-height:29px;color:#007000"><span class="z"><i class="k">輸</i></span></div>
<div class="c" style="left:851px;width:55px;top:638px;height:27px;line-height:29px;color:#007000"><span class="z"><i class="k">小</i></span></div>
<div class="ln" style="left:0px;width:906px;top:665px;height:1px;background:#c0c0c0"></div>
<div class="ln" style="left:67px;width:1px;top:638px;height:27px;background:#c0c0c0"></div>
<div class="ln" style="left:139px;width:1px;top:638px;height:27px;background:#c0c0c0"></div>
<div class="ln" style="left:242px;width:1px;top:638px;height:27px;background:#c0c0c0"></div>
<div class="ln" style="left:326px;width:1px;top:638px;height:27px;background:#c0c0c0"></div>
<div class="ln" style="left:364px;width:1px;top:638px;height:27px;background:#c0c0c0"></div>
<div class="ln" style="left:434px;width:1px;top:638px;height:27px;background:#c0c0c0"></div>
<div class="ln" style="left:472px;width:1px;top:638px;height:27px;background:#c0c0c0"></div>
<div class="ln" style="left:559px;width:1px;top:638px;height:27px;background:#c0c0c0"></div>
<div class="ln" style="left:597px;width:1px;top:638px;height:27px;background:#c0c0c0"></div>
<div class="ln" style="left:656px;width:1px;top:638px;height:27px;background:#c0c0c0"></div>
<div class="ln" style="left:716px;width:1px;top:638px;height:27px;background:#c0c0c0"></div>
<div class="ln" style="left:777px;width:1px;top:638px;height:27px;background:#c0c0c0"></div>
<div class="ln" style="left:814px;width:1px;top:638px;height:27px;background:#c0c0c0"></div>
<div class="ln" style="left:851px;width:1px;top:638px;height:27px;background:#c0c0c0"></div>
<div class="bg" style="top:666px;height:27px;background:#efefef"></div>
<div class="bg" style="top:666px;height:27px;left:434px;width:163px;background:#fdf8f5"></div>
<div class="bg" style="top:666px;height:27px;left:597px;width:180px;background:#eef6fb"></div>
<div class="c ty" style="left:0px;width:67px;top:666px;height:27px;line-height:30px;background:#ff3333"><span class="z"><i class="k">英</i><i class="k">超</i></span></div>
<div class="c" style="left:67px;width:72px;top:666px;height:27px;line-height:29px;"><span class="n">26-02-07</span></div>
<div class="c" style="left:139px;width:103px;top:666px;height:27px;line-height:29px;"><span style="color:#007000"><span class="z"><i class="k">阿</i><i class="k">森</i><i class="k">纳</i></span></span></div>
<div class="c" style="left:242px;width:84px;top:666px;height:27px;line-height:29px;"><span style="color:#f00"><span class="n">3-0</span></span><span class="n">(1-0)</span></div>
<div class="c" style="left:326px;width:38px;top:666px;height:27px;line-height:29px;"><span class="n">5-2</span></div>
<div class="c" style="left:364px;width:70px;top:666px;height:27px;line-height:29px;"><span style="color:#000"><span class="z"><i class="k">桑</i><i class="k">德</i><i class="k">兰</i></span></span></div>
<div class="c" style="left:434px;width:38px;top:666px;height:27px;line-height:29px;"><span class="n">0.87</span></div>
<div class="c" style="left:472px;width:87px;top:666px;height:27px;line-height:29px;"><span class="z"><i class="k">球</i><i class="k">半</i></span></div>
<div class="c" style="left:559px;width:38px;top:666px;height:27px;line-height:29px;"><span class="n">1.01</span></div>
<div class="c" style="left:597px;width:59px;top:666px;height:27px;line-height:29px;"><span class="n">1.26</span></div>
<div class="c" style="left:656px;width:60px;top:666px;height:27px;line-height:29px;"><span class="n">5.77</span></div>
<div class="c" style="left:716px;width:61px;top:666px;height:27px;line-height:29px;"><span class="n">11.93</span></div>
<div class="c" style="left:777px;width:37px;top:666px;height:27px;line-height:29px;color:#ff0000"><span class="z"><i class="k">勝</i></span></div>
<div class="c" style="left:814px;width:37px;top:666px;height:27px;line-height:29px;color:#ff0000"><span class="z"><i class="k">贏</i></span></div>
<div class="c" style="left:851px;width:55px;top:666px;height:27px;line-height:29px;color:#ff0000"><span class="z"><i class="k">大</i></span></div>
<div class="ln" style="left:0px;width:906px;top:693px;height:1px;background:#c0c0c0"></div>
<div class="ln" style="left:67px;width:1px;top:666px;height:27px;background:#c0c0c0"></div>
<div class="ln" style="left:139px;width:1px;top:666px;height:27px;background:#c0c0c0"></div>
<div class="ln" style="left:242px;width:1px;top:666px;height:27px;background:#c0c0c0"></div>
<div class="ln" style="left:326px;width:1px;top:666px;height:27px;background:#c0c0c0"></div>
<div class="ln" style="left:364px;width:1px;top:666px;height:27px;background:#c0c0c0"></div>
<div class="ln" style="left:434px;width:1px;top:666px;height:27px;background:#c0c0c0"></div>
<div class="ln" style="left:472px;width:1px;top:666px;height:27px;background:#c0c0c0"></div>
<div class="ln" style="left:559px;width:1px;top:666px;height:27px;background:#c0c0c0"></div>
<div class="ln" style="left:597px;width:1px;top:666px;height:27px;background:#c0c0c0"></div>
<div class="ln" style="left:656px;width:1px;top:666px;height:27px;background:#c0c0c0"></div>
<div class="ln" style="left:716px;width:1px;top:666px;height:27px;background:#c0c0c0"></div>
<div class="ln" style="left:777px;width:1px;top:666px;height:27px;background:#c0c0c0"></div>
<div class="ln" style="left:814px;width:1px;top:666px;height:27px;background:#c0c0c0"></div>
<div class="ln" style="left:851px;width:1px;top:666px;height:27px;background:#c0c0c0"></div>
<div class="bg" style="top:694px;height:27px;background:#ffffff"></div>
<div class="bg" style="top:694px;height:27px;left:434px;width:163px;background:#fdf8f5"></div>
<div class="bg" style="top:694px;height:27px;left:597px;width:180px;background:#eef6fb"></div>
<div class="c ty" style="left:0px;width:67px;top:694px;height:27px;line-height:30px;background:#888888"><span class="z"><i class="k">英</i><i class="k">联</i><i class="k">杯</i></span></div>
<div class="c" style="left:67px;width:72px;top:694px;height:27px;line-height:29px;"><span class="n">26-02-04</span></div>
<div class="c" style="left:139px;width:103px;top:694px;height:27px;line-height:29px;"><span style="color:#007000"><span class="z"><i class="k">阿</i><i class="k">森</i><i class="k">纳</i></span></span></div>
<div class="c" style="left:242px;width:84px;top:694px;height:27px;line-height:29px;"><span style="color:#f00"><span class="n">1-0</span></span><span class="n">(0-0)</span></div>
<div class="c" style="left:326px;width:38px;top:694px;height:27px;line-height:29px;"><span class="n">2-5</span></div>
<div class="c" style="left:364px;width:70px;top:694px;height:27px;line-height:29px;"><span style="color:#000"><span class="z"><i class="k">切</i><i class="k">尔</i><i class="k">西</i></span></span></div>
<div class="c" style="left:434px;width:38px;top:694px;height:27px;line-height:29px;"><span class="n">0.95</span></div>
<div class="c" style="left:472px;width:87px;top:694px;height:27px;line-height:29px;"><span class="z"><i class="k">半</i></span><span class="n">/</span><span class="z"><i class="k">一</i></span></div>
<div class="c" style="left:559px;width:38px;top:694px;height:27px;line-height:29px;"><span class="n">0.93</span></div>
<div class="c" style="left:597px;width:59px;top:694px;height:27px;line-height:29px;"><span class="n">1.70</span></div>
<div class="c" style="left:656px;width:60px;top:694px;height:27px;line-height:29px;"><span class="n">3.96</span></div>
<div class="c" style="left:716px;width:61px;top:694px;height:27px;line-height:29px;"><span class="n">4.65</span></div>
<div class="c" style="left:777px;width:37px;top:694px;height:27px;line-height:29px;color:#ff0000"><span class="z"><i class="k">勝</i></span></div>
<div class="c" style="left:814px;width:37px;top:694px;height:27px;line-height:29px;color:#ff0000"><span class="z"><i class="k">贏</i></span></div>
<div class="c" style="left:851px;width:55px;top:694px;height:27px;line-height:29px;color:#007000"><span class="z"><i class="k">小</i></span></div>
<div class="ln" style="left:0px;width:906px;top:721px;height:1px;background:#c0c0c0"></div>
<div class="ln" style="left:67px;width:1px;top:694px;height:27px;background:#c0c0c0"></div>
<div class="ln" style="left:139px;width:1px;top:694px;height:27px;background:#c0c0c0"></div>
<div class="ln" style="left:242px;width:1px;top:694px;height:27px;background:#c0c0c0"></div>
<div class="ln" style="left:326px;width:1px;top:694px;height:27px;background:#c0c0c0"></div>
<div class="ln" style="left:364px;width:1px;top:694px;height:27px;background:#c0c0c0"></div>
<div class="ln" style="left:434px;width:1px;top:694px;height:27px;background:#c0c0c0"></div>
<div class="ln" style="left:472px;width:1px;top:694px;height:27px;background:#c0c0c0"></div>
<div class="ln" style="left:559px;width:1px;top:694px;height:27px;background:#c0c0c0"></div>
<div class="ln" style="left:597px;width:1px;top:694px;height:27px;background:#c0c0c0"></div>
<div class="ln" style="left:656px;width:1px;top:694px;height:27px;background:#c0c0c0"></div>
<div class="ln" style="left:716px;width:1px;top:694px;height:27px;background:#c0c0c0"></div>
<div class="ln" style="left:777px;width:1px;top:694px;height:27px;background:#c0c0c0"></div>
<div class="ln" style="left:814px;width:1px;top:694px;height:27px;background:#c0c0c0"></div>
<div class="ln" style="left:851px;width:1px;top:694px;height:27px;background:#c0c0c0"></div>
<div class="bg" style="top:722px;height:27px;background:#efefef"></div>
<div class="bg" style="top:722px;height:27px;left:434px;width:163px;background:#fdf8f5"></div>
<div class="bg" style="top:722px;height:27px;left:597px;width:180px;background:#eef6fb"></div>
<div class="c ty" style="left:0px;width:67px;top:722px;height:27px;line-height:30px;background:#ff3333"><span class="z"><i class="k">英</i><i class="k">超</i></span></div>
<div class="c" style="left:67px;width:72px;top:722px;height:27px;line-height:29px;"><span class="n">26-01-31</span></div>
<div class="c" style="left:139px;width:103px;top:722px;height:27px;line-height:29px;"><span style="color:#000"><span class="z"><i class="k">利</i><i class="k">兹</i><i class="k">联</i></span></span></div>
<div class="c" style="left:242px;width:84px;top:722px;height:27px;line-height:29px;"><span style="color:#f00"><span class="n">0-4</span></span><span class="n">(0-2)</span></div>
<div class="c" style="left:326px;width:38px;top:722px;height:27px;line-height:29px;"><span class="n">4-12</span></div>
<div class="c" style="left:364px;width:70px;top:722px;height:27px;line-height:29px;"><span style="color:#007000"><span class="z"><i class="k">阿</i><i class="k">森</i><i class="k">纳</i></span></span></div>
<div class="c" style="left:434px;width:38px;top:722px;height:27px;line-height:29px;"><span class="n">0.76</span></div>
<div class="c" style="left:472px;width:87px;top:722px;height:27px;line-height:29px;"><span class="st"><span class="n">*</span></span><span class="z"><i class="k">一</i><i class="k">球</i></span></div>
<div class="c" style="left:559px;width:38px;top:722px;height:27px;line-height:29px;"><span class="n">1.13</span></div>
<div class="c" style="left:597px;width:59px;top:722px;height:27px;line-height:29px;"><span class="n">6.09</span></div>
<div class="c" style="left:656px;width:60px;top:722px;height:27px;line-height:29px;"><span class="n">4.14</span></div>
<div class="c" style="left:716px;width:61px;top:722px;height:27px;line-height:29px;"><span class="n">1.55</span></div>
<div class="c" style="left:777px;width:37px;top:722px;height:27px;line-height:29px;color:#ff0000"><span class="z"><i class="k">勝</i></span></div>
<div class="c" style="left:814px;width:37px;top:722px;height:27px;line-height:29px;color:#ff0000"><span class="z"><i class="k">贏</i></span></div>
<div class="c" style="left:851px;width:55px;top:722px;height:27px;line-height:29px;color:#ff0000"><span class="z"><i class="k">大</i></span></div>
<div class="ln" style="left:0px;width:906px;top:749px;height:1px;background:#c0c0c0"></div>
<div class="ln" style="left:67px;width:1px;top:722px;height:27px;background:#c0c0c0"></div>
<div class="ln" style="left:139px;width:1px;top:722px;height:27px;background:#c0c0c0"></div>
<div class="ln" style="left:242px;width:1px;top:722px;height:27px;background:#c0c0c0"></div>
<div class="ln" style="left:326px;width:1px;top:722px;height:27px;background:#c0c0c0"></div>
<div class="ln" style="left:364px;width:1px;top:722px;height:27px;background:#c0c0c0"></div>
<div class="ln" style="left:434px;width:1px;top:722px;height:27px;background:#c0c0c0"></div>
<div class="ln" style="left:472px;width:1px;top:722px;height:27px;background:#c0c0c0"></div>
<div class="ln" style="left:559px;width:1px;top:722px;height:27px;background:#c0c0c0"></div>
<div class="ln" style="left:597px;width:1px;top:722px;height:27px;background:#c0c0c0"></div>
<div class="ln" style="left:656px;width:1px;top:722px;height:27px;background:#c0c0c0"></div>
<div class="ln" style="left:716px;width:1px;top:722px;height:27px;background:#c0c0c0"></div>
<div class="ln" style="left:777px;width:1px;top:722px;height:27px;background:#c0c0c0"></div>
<div class="ln" style="left:814px;width:1px;top:722px;height:27px;background:#c0c0c0"></div>
<div class="ln" style="left:851px;width:1px;top:722px;height:27px;background:#c0c0c0"></div>
</body></html>
